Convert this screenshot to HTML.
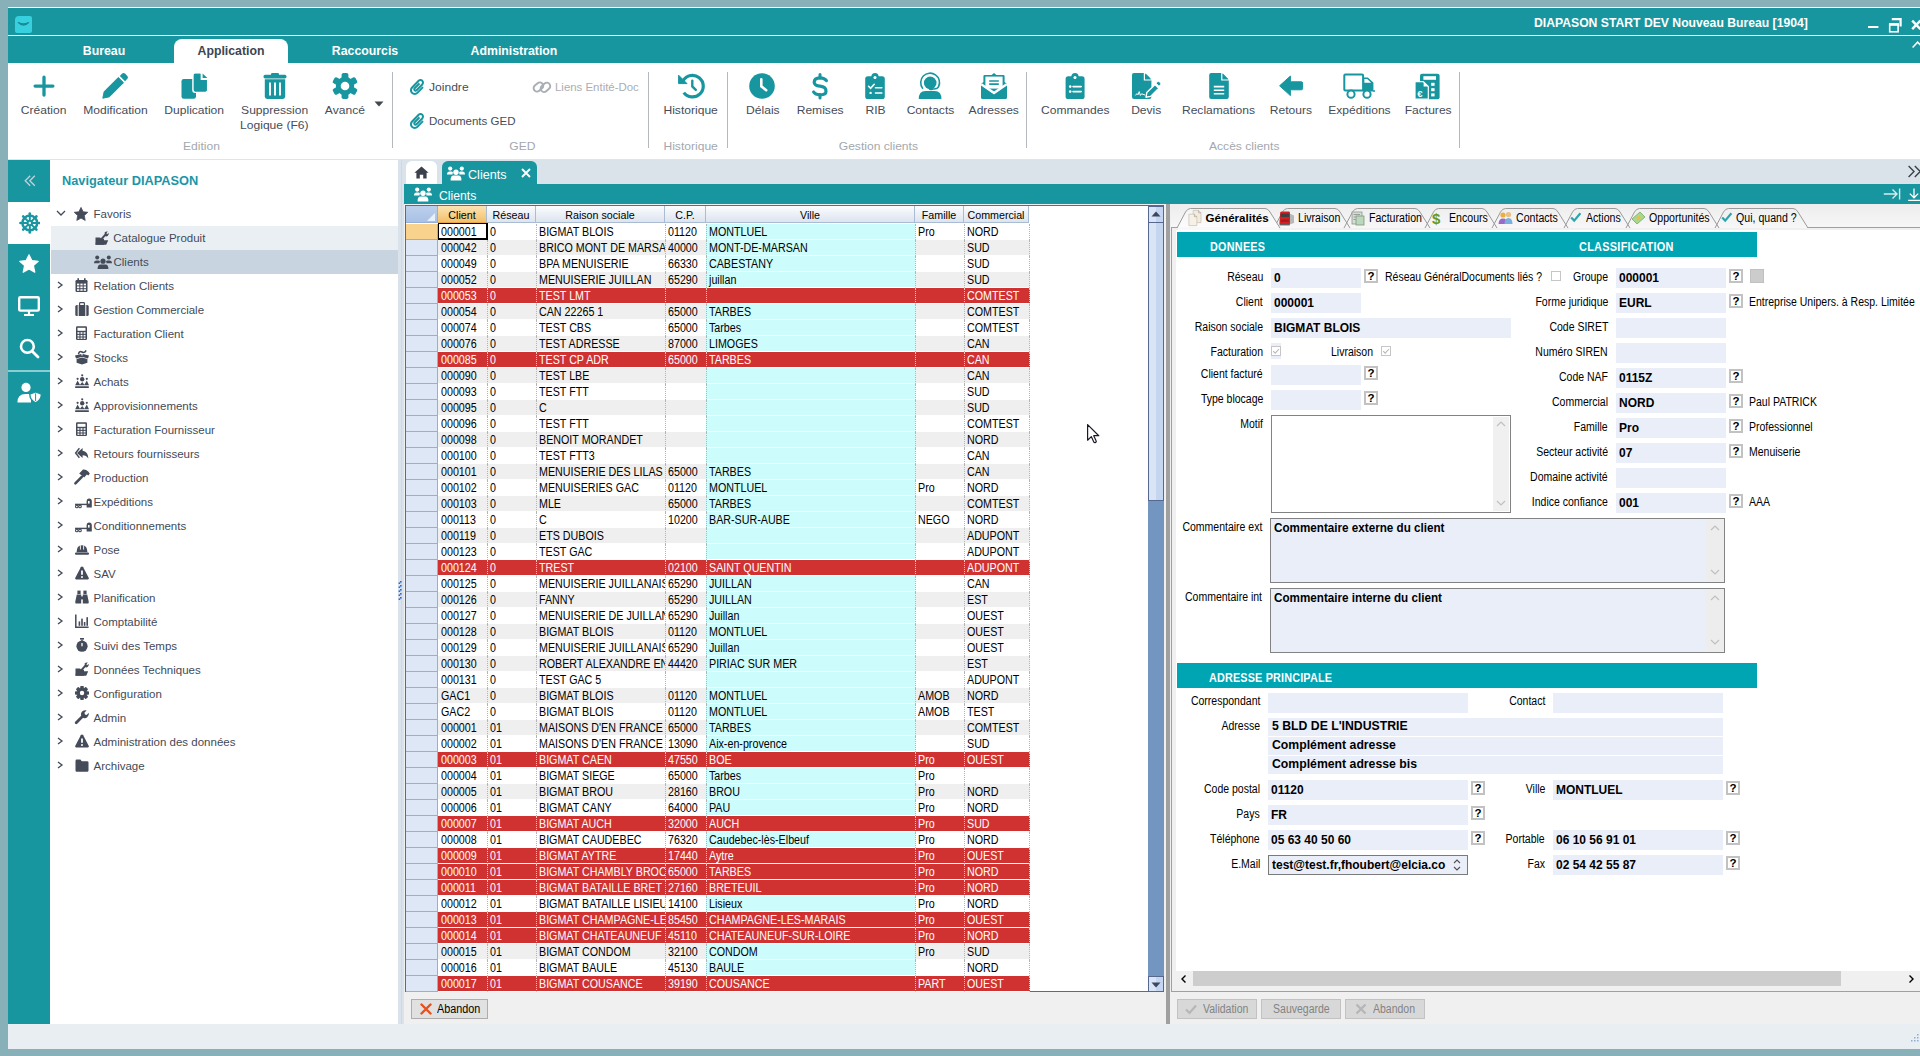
<!DOCTYPE html><html><head><meta charset="utf-8"><title>DIAPASON</title><style>
html,body{margin:0;padding:0;}
body{width:1920px;height:1056px;overflow:hidden;position:relative;background:#88b0b8;font-family:"Liberation Sans",sans-serif;}
.a{position:absolute;}
.t{position:absolute;white-space:nowrap;}
</style></head><body>
<div class="a" style="left:8px;top:7px;width:1912px;height:1px;background:#fff"></div>
<div class="a" style="left:8px;top:8px;width:1912px;height:27px;background:#1896a0"></div>
<div class="a" style="left:8px;top:35px;width:1912px;height:1px;background:#fff"></div>
<div class="a" style="left:8px;top:36px;width:1912px;height:27px;background:#1896a0"></div>
<div class="a" style="left:8px;top:63px;width:1912px;height:96px;background:#fff"></div>
<div class="a" style="left:8px;top:159px;width:1912px;height:1px;background:#dce4ec"></div>
<!-- sidebar -->
<div class="a" style="left:8px;top:160px;width:42px;height:864px;background:#1896a0"></div>
<div class="a" style="left:8px;top:202px;width:42px;height:42px;background:#fff"></div>
<div class="a" style="left:8px;top:370px;width:42px;height:2px;background:#8ccdd2"></div>
<!-- navigator -->
<div class="a" style="left:50px;top:160px;width:348px;height:864px;background:#fff"></div>
<div class="a" style="left:398px;top:160px;width:6px;height:864px;background:#dae3eb"></div>
<div class="a" style="left:401px;top:160px;width:1px;height:864px;background:#c3dbf8"></div>
<svg class="a" style="left:398px;top:581px" width="4" height="20"><g fill="#2a6ad8"><rect x="2" y="0" width="1.6" height="1.6"/><rect x="0.6" y="1.4" width="1.6" height="1.6"/><rect x="2" y="4" width="1.6" height="1.6"/><rect x="0.6" y="5.4" width="1.6" height="1.6"/><rect x="2" y="8" width="1.6" height="1.6"/><rect x="0.6" y="9.4" width="1.6" height="1.6"/><rect x="2" y="12" width="1.6" height="1.6"/><rect x="0.6" y="13.4" width="1.6" height="1.6"/><rect x="2" y="16" width="1.6" height="1.6"/><rect x="0.6" y="17.4" width="1.6" height="1.6"/></g></svg>
<!-- tab area -->
<div class="a" style="left:404px;top:160px;width:1516px;height:24px;background:#dbe3ea"></div>
<div class="a" style="left:404px;top:184px;width:1516px;height:20px;background:#1896a0"></div>
<!-- grid area bg -->
<div class="a" style="left:404px;top:204px;width:762px;height:820px;background:#f0f0f0"></div>
<div class="a" style="left:405px;top:205px;width:759px;height:787px;background:#fff;box-sizing:border-box;border:1px solid #696969"></div>
<!-- splitter -->
<div class="a" style="left:1164px;top:204px;width:6px;height:820px;background:#f0f0f0"></div>
<div class="a" style="left:1166px;top:204px;width:4px;height:820px;background:#a0a0a0"></div>
<!-- right panel -->
<div class="a" style="left:1170px;top:204px;width:750px;height:820px;background:#f0f0f0"></div>
<div class="a" style="left:1171px;top:227px;width:749px;height:765px;background:#f0f0f0;border-left:1px solid #a0a0a0;border-top:1px solid #a0a0a0;border-bottom:1px solid #a0a0a0;box-sizing:border-box"></div>
<div class="a" style="left:1176px;top:230px;width:744px;height:741px;background:#fff"></div>
<!-- status bar -->
<div class="a" style="left:8px;top:1024px;width:1912px;height:25px;background:#e9eef2"></div>

<svg class="a" style="left:15px;top:16px;" width="17" height="17" viewBox="0 0 17 17"><path d="M4 0 H15 Q17 0 17 2 V15 Q17 17 15 17 H2 Q0 17 0 15 V4 Q0 0 4 0Z" fill="#36d0de"/><path d="M3.4 6.6 Q8.5 11.6 13.6 6.6 Q8.5 9.4 3.4 6.6Z" fill="#1a8a96" stroke="#1a8a96" stroke-width="1.3" stroke-linejoin="round"/></svg>
<div class="t" style="top:16.67px;font-size:12.2px;height:12.2px;line-height:12.2px;color:#fff;font-weight:bold;left:1534px;">DIAPASON START DEV Nouveau Bureau [1904]</div>
<svg class="a" style="left:1865px;top:16px;overflow:visible" width="55" height="17" viewBox="0 0 55 17"><path d="M3 11 H13.4" stroke="#fff" stroke-width="2"/><rect x="24.7" y="8.2" width="8.4" height="7.6" fill="none" stroke="#fff" stroke-width="1.6"/><rect x="24" y="7" width="9.8" height="2.8" fill="#fff"/><path d="M26.8 3.2 H35.6 V10.6" fill="none" stroke="#fff" stroke-width="2.2"/><path d="M47.2 4.6 L55.4 13.2 M55.4 4.6 L47.2 13.2" stroke="#fff" stroke-width="2.4"/></svg>
<div class="a" style="left:174px;top:39px;width:114px;height:24px;background:#fff;border-radius:8px 8px 0 0"></div>
<div class="t" style="top:45.09px;font-size:12.3px;height:12.3px;line-height:12.3px;color:#fff;font-weight:bold;left:-196.0px;width:600px;text-align:center;">Bureau</div>
<div class="t" style="top:45.09px;font-size:12.3px;height:12.3px;line-height:12.3px;color:#3d4551;font-weight:bold;left:-69.0px;width:600px;text-align:center;">Application</div>
<div class="t" style="top:45.09px;font-size:12.3px;height:12.3px;line-height:12.3px;color:#fff;font-weight:bold;left:65.0px;width:600px;text-align:center;">Raccourcis</div>
<div class="t" style="top:45.09px;font-size:12.3px;height:12.3px;line-height:12.3px;color:#fff;font-weight:bold;left:214.0px;width:600px;text-align:center;">Administration</div>
<svg class="a" style="left:1910px;top:40px;" width="15" height="10" viewBox="0 0 15 10"><path d="M2.6 7.4 L7.6 2.2 L12.6 7.4" fill="none" stroke="#fff" stroke-width="1.5"/></svg>
<svg class="a" style="left:31.0px;top:73px;overflow:visible" width="26" height="26" viewBox="0 0 26 26"><path d="M13 4.2v17.8M4.1 13.1h17.8" stroke="#1896a0" stroke-width="3.3" stroke-linecap="round"/></svg>
<div class="t" style="top:104.85px;font-size:11.4px;height:11.4px;line-height:11.4px;color:#454d59;left:-26.0px;width:140px;text-align:center;"><span style="display:inline-block;transform:scaleX(1.06);transform-origin:50% 0">Création</span></div>
<svg class="a" style="left:102.0px;top:73px;overflow:visible" width="26" height="26" viewBox="0 0 26 26"><path d="M0.8 25.2 L2.2 18.6 L16.3 4.5 L21.5 9.7 L7.4 23.8 Z" fill="#1896a0" stroke="#1896a0" stroke-width="1" stroke-linejoin="round"/><path d="M17.8 3 L20.2 0.6 Q21.6 -0.6 23 0.6 L25.4 3 Q26.6 4.4 25.4 5.8 L23 8.2 Z" fill="#1896a0"/></svg>
<div class="t" style="top:104.85px;font-size:11.4px;height:11.4px;line-height:11.4px;color:#454d59;left:45.0px;width:140px;text-align:center;"><span style="display:inline-block;transform:scaleX(1.06);transform-origin:50% 0">Modification</span></div>
<svg class="a" style="left:181.0px;top:73px;overflow:visible" width="26" height="26" viewBox="0 0 26 26"><rect x="0.5" y="6" width="14.5" height="19.8" rx="2.2" fill="#1896a0"/><path d="M14 0 H20.2 V6.2 H26.6 V17 Q26.6 19.2 24.4 19.2 H14.2 Q12 19.2 12 17 V2 Q12 0 14 0Z" fill="#1896a0" stroke="#fff" stroke-width="1.6"/><path d="M14 0.8 H19.4 V7 H25.8 V17 Q25.8 18.4 24.4 18.4 H14.2 Q12.8 18.4 12.8 17 V2 Q12.8 0.8 14 0.8Z" fill="#1896a0"/><path d="M21.6 0.4 L26.4 5 H21.6Z" fill="#1896a0"/></svg>
<div class="t" style="top:104.85px;font-size:11.4px;height:11.4px;line-height:11.4px;color:#454d59;left:124.0px;width:140px;text-align:center;"><span style="display:inline-block;transform:scaleX(1.06);transform-origin:50% 0">Duplication</span></div>
<svg class="a" style="left:261.5px;top:73px;overflow:visible" width="26" height="26" viewBox="0 0 26 26"><rect x="1.5" y="1.8" width="23" height="3.6" rx="1.6" fill="#1896a0"/><rect x="9" y="0" width="8" height="3" rx="1.2" fill="#1896a0"/><path d="M2.8 6.2 H23.2 V23.6 Q23.2 26 20.8 26 H5.2 Q2.8 26 2.8 23.6Z" fill="#1896a0"/><path d="M8 9.5V22.5M13 9.5V22.5M18 9.5V22.5" stroke="#fff" stroke-width="1.9"/></svg>
<div class="t" style="top:104.85px;font-size:11.4px;height:11.4px;line-height:11.4px;color:#454d59;left:204.5px;width:140px;text-align:center;"><span style="display:inline-block;transform:scaleX(1.06);transform-origin:50% 0">Suppression</span></div>
<div class="t" style="top:119.85px;font-size:11.4px;height:11.4px;line-height:11.4px;color:#454d59;left:204.5px;width:140px;text-align:center;"><span style="display:inline-block;transform:scaleX(1.06);transform-origin:50% 0">Logique (F6)</span></div>
<svg class="a" style="left:332.3px;top:73px;overflow:visible" width="26" height="26" viewBox="0 0 26 26"><g fill="#1896a0"><circle cx="13" cy="13" r="9.2"/><rect x="9.6" y="0" width="6.8" height="26" rx="1.8"/><rect x="9.6" y="0" width="6.8" height="26" rx="1.8" transform="rotate(60 13 13)"/><rect x="9.6" y="0" width="6.8" height="26" rx="1.8" transform="rotate(120 13 13)"/></g><circle cx="13" cy="13" r="4.3" fill="#fff"/></svg>
<div class="t" style="top:104.85px;font-size:11.4px;height:11.4px;line-height:11.4px;color:#454d59;left:275.3px;width:140px;text-align:center;"><span style="display:inline-block;transform:scaleX(1.06);transform-origin:50% 0">Avancé</span></div>
<svg class="a" style="left:678.0px;top:73px;overflow:visible" width="26" height="26" viewBox="0 0 26 26"><path d="M5.2 7.6 A10.8 10.8 0 1 1 5.8 19.6" fill="none" stroke="#1896a0" stroke-width="3.2"/><path d="M0.6 2.2 V10.6 H9Z" fill="#1896a0" stroke="#1896a0" stroke-width="1" stroke-linejoin="round"/><path d="M14.3 7.6 V13.4 L17.8 16.9" fill="none" stroke="#1896a0" stroke-width="2.4" stroke-linecap="round"/></svg>
<div class="t" style="top:104.85px;font-size:11.4px;height:11.4px;line-height:11.4px;color:#454d59;left:620.7px;width:140px;text-align:center;"><span style="display:inline-block;transform:scaleX(1.06);transform-origin:50% 0">Historique</span></div>
<svg class="a" style="left:749.4px;top:73px;overflow:visible" width="26" height="26" viewBox="0 0 26 26"><circle cx="13" cy="13" r="12.8" fill="#1896a0"/><path d="M12.3 6.3 V13.3 L17.2 17.2" fill="none" stroke="#fff" stroke-width="2.6" stroke-linecap="round"/></svg>
<div class="t" style="top:104.85px;font-size:11.4px;height:11.4px;line-height:11.4px;color:#454d59;left:692.4px;width:140px;text-align:center;"><span style="display:inline-block;transform:scaleX(1.06);transform-origin:50% 0">Délais</span></div>
<svg class="a" style="left:807.3px;top:73px;overflow:visible" width="26" height="26" viewBox="0 0 26 26"><path d="M19.4 7.6 Q17.5 4.8 13 4.8 Q7.2 4.8 7.2 9.2 Q7.2 12.6 13 13.2 Q19 13.8 19 18.2 Q19 21.8 13 21.8 Q8.4 21.8 6.6 19" fill="none" stroke="#1896a0" stroke-width="3.2" stroke-linecap="round"/><path d="M13 1.4V5M13 21.5V25" stroke="#1896a0" stroke-width="3" stroke-linecap="round"/></svg>
<div class="t" style="top:104.85px;font-size:11.4px;height:11.4px;line-height:11.4px;color:#454d59;left:750.3px;width:140px;text-align:center;"><span style="display:inline-block;transform:scaleX(1.06);transform-origin:50% 0">Remises</span></div>
<svg class="a" style="left:862.0px;top:73px;overflow:visible" width="26" height="26" viewBox="0 0 26 26"><rect x="3.2" y="3.3" width="19.6" height="22.7" rx="2.6" fill="#1896a0"/><circle cx="13" cy="3.6" r="3.6" fill="#1896a0"/><circle cx="13" cy="4.6" r="1.5" fill="#fff"/><path d="M6.6 13.3 L8.6 15.3 L12.2 11.3 M13.5 14.8 H19.8 M13.5 20 H19.8" fill="none" stroke="#fff" stroke-width="1.6" stroke-linecap="round"/><circle cx="8.6" cy="19.9" r="1.2" fill="#fff"/></svg>
<div class="t" style="top:104.85px;font-size:11.4px;height:11.4px;line-height:11.4px;color:#454d59;left:805.0px;width:140px;text-align:center;"><span style="display:inline-block;transform:scaleX(1.06);transform-origin:50% 0">RIB</span></div>
<svg class="a" style="left:917.0px;top:73px;overflow:visible" width="26" height="26" viewBox="0 0 26 26"><circle cx="13.2" cy="9.9" r="6.3" fill="#1896a0"/><path d="M5.6 15.2 A9.4 9.4 0 1 1 21.6 13.6 Q20.6 16.4 15.4 16" fill="none" stroke="#1896a0" stroke-width="1.6" stroke-linecap="round"/><ellipse cx="14" cy="15.8" rx="2.2" ry="1.5" fill="#1896a0"/><path d="M1.8 26 Q1.6 18.2 8.6 18 H17.6 Q24.6 18.2 24.4 26Z" fill="#1896a0"/></svg>
<div class="t" style="top:104.85px;font-size:11.4px;height:11.4px;line-height:11.4px;color:#454d59;left:860.0px;width:140px;text-align:center;"><span style="display:inline-block;transform:scaleX(1.06);transform-origin:50% 0">Contacts</span></div>
<svg class="a" style="left:980.6px;top:73px;overflow:visible" width="26" height="26" viewBox="0 0 26 26"><path d="M0 11 L2.4 9 V3.2 Q2.4 2 3.6 2 H10.6 L13 0 L15.4 2 H22.4 Q23.6 2 23.6 3.2 V9 L26 11 V24 Q26 26 24 26 H2 Q0 26 0 24Z" fill="#1896a0"/><rect x="4.4" y="3.6" width="17.2" height="12" fill="#fff"/><path d="M8.2 8 H17.8 M8.2 11.2 H17.8" stroke="#1896a0" stroke-width="1.7"/><path d="M0 11.4 L13 20.2 L26 11.4" fill="none" stroke="#fff" stroke-width="3"/><path d="M0 12.6 L13 21.4 L26 12.6 V24 Q26 26 24 26 H2 Q0 26 0 24Z" fill="#1896a0"/></svg>
<div class="t" style="top:104.85px;font-size:11.4px;height:11.4px;line-height:11.4px;color:#454d59;left:923.6px;width:140px;text-align:center;"><span style="display:inline-block;transform:scaleX(1.06);transform-origin:50% 0">Adresses</span></div>
<svg class="a" style="left:1062.2px;top:73px;overflow:visible" width="26" height="26" viewBox="0 0 26 26"><rect x="3.6" y="3.3" width="19" height="22.7" rx="2.6" fill="#1896a0"/><circle cx="13" cy="3.6" r="3.6" fill="#1896a0"/><circle cx="13" cy="4.6" r="1.5" fill="#fff"/><circle cx="8.2" cy="13.6" r="1.3" fill="#fff"/><circle cx="8.2" cy="18.6" r="1.3" fill="#fff"/><path d="M11 13.6 H19.2 M11 18.6 H19.2" stroke="#fff" stroke-width="1.6" stroke-linecap="round"/></svg>
<div class="t" style="top:104.85px;font-size:11.4px;height:11.4px;line-height:11.4px;color:#454d59;left:1005.2px;width:140px;text-align:center;"><span style="display:inline-block;transform:scaleX(1.06);transform-origin:50% 0">Commandes</span></div>
<svg class="a" style="left:1131.8px;top:73px;overflow:visible" width="26" height="26" viewBox="0 0 26 26"><path d="M2 0 H12.5 L19.4 6.9 V24 Q19.4 26 17.4 26 H2 Q0 26 0 24 V2 Q0 0 2 0Z" fill="#1896a0"/><path d="M12.4 -0.2 V7 H19.6" fill="none" stroke="#fff" stroke-width="1.2"/><path d="M13.6 0.4 L19 5.8 H13.6Z" fill="#1896a0"/><path d="M14 24.2 L14.8 19.6 L23 11.4 L26.8 15.2 L18.6 23.4Z" fill="#1896a0" stroke="#fff" stroke-width="1.4" stroke-linejoin="round"/><path d="M24.2 10.2 L25.4 9 Q26.4 8 27.4 9 L28.2 9.8 Q29.2 10.8 28.2 11.8 L27 13Z" fill="#1896a0" stroke="#fff" stroke-width="0.6"/><path d="M3.4 22.4 L5 20.6 L6 21.8 L7.2 18.6 L8.4 22.4 L9.6 20.8 L13 22" fill="none" stroke="#fff" stroke-width="1"/></svg>
<div class="t" style="top:104.85px;font-size:11.4px;height:11.4px;line-height:11.4px;color:#454d59;left:1076.4px;width:140px;text-align:center;"><span style="display:inline-block;transform:scaleX(1.06);transform-origin:50% 0">Devis</span></div>
<svg class="a" style="left:1206.4px;top:73px;overflow:visible" width="26" height="26" viewBox="0 0 26 26"><g transform="translate(3.2 0)"><path d="M2 0 H12.6 L19.6 7 V24 Q19.6 26 17.6 26 H2 Q0 26 0 24 V2 Q0 0 2 0Z" fill="#1896a0"/><path d="M12.6 -0.2 V7 H19.8" fill="none" stroke="#fff" stroke-width="1.2"/><path d="M13.7 0.6 L19 5.9 H13.7Z" fill="#1896a0"/><path d="M4.6 13.6 H15 M4.6 17.2 H15 M4.6 20.8 H15" stroke="#fff" stroke-width="1.6"/></g></svg>
<div class="t" style="top:104.85px;font-size:11.4px;height:11.4px;line-height:11.4px;color:#454d59;left:1148.4px;width:140px;text-align:center;"><span style="display:inline-block;transform:scaleX(1.06);transform-origin:50% 0">Reclamations</span></div>
<svg class="a" style="left:1278.3px;top:73px;overflow:visible" width="26" height="26" viewBox="0 0 26 26"><path d="M1.6 12.8 L12.4 3 V8.8 H23.4 Q24.6 8.8 24.6 10 V15.6 Q24.6 16.8 23.4 16.8 H12.4 V22.6Z" fill="#1896a0" stroke="#1896a0" stroke-width="1" stroke-linejoin="round"/></svg>
<div class="t" style="top:104.85px;font-size:11.4px;height:11.4px;line-height:11.4px;color:#454d59;left:1221.3px;width:140px;text-align:center;"><span style="display:inline-block;transform:scaleX(1.06);transform-origin:50% 0">Retours</span></div>
<svg class="a" style="left:1343.0px;top:73px;overflow:visible" width="33" height="26" viewBox="0 0 33 26"><path d="M2.4 1.5 H19 Q20.1 1.5 20.1 2.6 V17.6 H2.4 Q1.3 17.6 1.3 16.5 V2.6 Q1.3 1.5 2.4 1.5Z" fill="none" stroke="#1896a0" stroke-width="2"/><path d="M20.1 4.4 H24.8 L30.4 9.6 V18.6 H20.1Z" fill="#1896a0"/><path d="M21.4 6 H24.2 L28.2 9.8 H21.4Z" fill="#fff"/><circle cx="8" cy="21.2" r="3.6" fill="#fff" stroke="#1896a0" stroke-width="2"/><circle cx="24" cy="21.2" r="3.6" fill="#fff" stroke="#1896a0" stroke-width="2"/><path d="M30 18 H32" stroke="#1896a0" stroke-width="1.5"/></svg>
<div class="t" style="top:104.85px;font-size:11.4px;height:11.4px;line-height:11.4px;color:#454d59;left:1289.5px;width:140px;text-align:center;"><span style="display:inline-block;transform:scaleX(1.06);transform-origin:50% 0">Expéditions</span></div>
<svg class="a" style="left:1415.0px;top:73px;overflow:visible" width="26" height="26" viewBox="0 0 26 26"><rect x="5" y="0.7" width="19.6" height="25.5" rx="2" fill="#1896a0"/><rect x="8.4" y="3.2" width="12.6" height="3.6" fill="#fff"/><path d="M0 8.6 H8.3 L13.3 13.6 V26.2 H0Z" fill="#1896a0" stroke="#fff" stroke-width="1.2"/><path d="M8.6 9 V13.4 H13" fill="#fff"/><rect x="16.2" y="9.8" width="3.4" height="3" fill="#fff"/><rect x="16.2" y="15.2" width="3.4" height="3" fill="#fff"/><rect x="16.2" y="20.4" width="3.4" height="3" fill="#fff"/><text x="2.2" y="23.6" font-size="9.5" font-family="Liberation Sans" font-weight="bold" fill="#fff">€</text></svg>
<div class="t" style="top:104.85px;font-size:11.4px;height:11.4px;line-height:11.4px;color:#454d59;left:1358.0px;width:140px;text-align:center;"><span style="display:inline-block;transform:scaleX(1.06);transform-origin:50% 0">Factures</span></div>
<svg class="a" style="left:374px;top:101px;" width="10" height="6" viewBox="0 0 10 6"><path d="M0.5 0.5 H9.5 L5 5.5Z" fill="#404851"/></svg>
<div class="a" style="left:392px;top:72px;width:1px;height:76px;background:#b4b9bf;"></div>
<div class="a" style="left:648px;top:72px;width:1px;height:76px;background:#b4b9bf;"></div>
<div class="a" style="left:727px;top:72px;width:1px;height:76px;background:#b4b9bf;"></div>
<div class="a" style="left:1026px;top:72px;width:1px;height:76px;background:#b4b9bf;"></div>
<div class="a" style="left:1459px;top:72px;width:1px;height:76px;background:#b4b9bf;"></div>
<div class="t" style="top:140.85px;font-size:11.4px;height:11.4px;line-height:11.4px;color:#a3a8ae;left:101.0px;width:200px;text-align:center;"><span style="display:inline-block;transform:scaleX(1.06);transform-origin:50% 0">Edition</span></div>
<div class="t" style="top:140.85px;font-size:11.4px;height:11.4px;line-height:11.4px;color:#a3a8ae;left:422.0px;width:200px;text-align:center;"><span style="display:inline-block;transform:scaleX(1.06);transform-origin:50% 0">GED</span></div>
<div class="t" style="top:140.85px;font-size:11.4px;height:11.4px;line-height:11.4px;color:#a3a8ae;left:591.0px;width:200px;text-align:center;"><span style="display:inline-block;transform:scaleX(1.06);transform-origin:50% 0">Historique</span></div>
<div class="t" style="top:140.85px;font-size:11.4px;height:11.4px;line-height:11.4px;color:#a3a8ae;left:778.5px;width:200px;text-align:center;"><span style="display:inline-block;transform:scaleX(1.06);transform-origin:50% 0">Gestion clients</span></div>
<div class="t" style="top:140.85px;font-size:11.4px;height:11.4px;line-height:11.4px;color:#a3a8ae;left:1144.0px;width:200px;text-align:center;"><span style="display:inline-block;transform:scaleX(1.06);transform-origin:50% 0">Accès clients</span></div>
<svg class="a" style="left:410px;top:79px;overflow:visible" width="14" height="16" viewBox="0 0 14 16"><svg viewBox="0 0 448 512" width="14" height="16"><path fill="#1896a0" d="M43.246 466.142c-58.43-60.289-57.341-157.511 1.386-217.581L254.392 34c44.316-45.332 116.351-45.336 160.671 0 43.89 44.894 43.943 117.329 0 162.276L232.214 383.128c-29.855 30.537-78.633 30.111-107.982-.998-28.275-29.97-27.368-77.473 1.452-106.953l143.743-146.835c6.182-6.314 16.312-6.422 22.626-.241l22.861 22.379c6.315 6.182 6.422 16.312.241 22.626L171.427 319.927c-4.932 5.045-5.236 13.428-.648 18.292 4.372 4.634 11.245 4.711 15.688.165l182.849-186.851c19.613-20.062 19.613-52.725-.011-72.798-19.189-19.627-49.957-19.637-69.154 0L90.39 293.295c-34.763 35.56-35.299 93.12-1.191 128.313 34.01 35.093 88.985 35.137 123.058.286l172.06-175.999c6.177-6.319 16.307-6.433 22.626-.256l22.877 22.364c6.319 6.177 6.434 16.307.256 22.626l-172.06 175.998c-59.576 60.938-155.943 60.216-214.77-.485z"/></svg></svg>
<div class="t" style="top:81.85px;font-size:11.4px;height:11.4px;line-height:11.4px;color:#454d59;left:429px;"><span style="display:inline-block;transform:scaleX(1.06);transform-origin:0 0">Joindre</span></div>
<svg class="a" style="left:410px;top:113px;overflow:visible" width="14" height="16" viewBox="0 0 14 16"><svg viewBox="0 0 448 512" width="14" height="16"><path fill="#1896a0" d="M43.246 466.142c-58.43-60.289-57.341-157.511 1.386-217.581L254.392 34c44.316-45.332 116.351-45.336 160.671 0 43.89 44.894 43.943 117.329 0 162.276L232.214 383.128c-29.855 30.537-78.633 30.111-107.982-.998-28.275-29.97-27.368-77.473 1.452-106.953l143.743-146.835c6.182-6.314 16.312-6.422 22.626-.241l22.861 22.379c6.315 6.182 6.422 16.312.241 22.626L171.427 319.927c-4.932 5.045-5.236 13.428-.648 18.292 4.372 4.634 11.245 4.711 15.688.165l182.849-186.851c19.613-20.062 19.613-52.725-.011-72.798-19.189-19.627-49.957-19.637-69.154 0L90.39 293.295c-34.763 35.56-35.299 93.12-1.191 128.313 34.01 35.093 88.985 35.137 123.058.286l172.06-175.999c6.177-6.319 16.307-6.433 22.626-.256l22.877 22.364c6.319 6.177 6.434 16.307.256 22.626l-172.06 175.998c-59.576 60.938-155.943 60.216-214.77-.485z"/></svg></svg>
<div class="t" style="top:116.02px;font-size:11.2px;height:11.2px;line-height:11.2px;color:#454d59;left:429px;"><span style="display:inline-block;transform:scaleX(1.03);transform-origin:0 0">Documents GED</span></div>
<svg class="a" style="left:532px;top:79px;overflow:visible" width="20" height="16" viewBox="0 0 20 16"><g fill="none" stroke="#a9aeb4" stroke-width="1.9"><rect x="1.2" y="4.6" width="10.5" height="6.8" rx="3.4" transform="rotate(-40 6.4 8)"/><rect x="8.2" y="5" width="10.5" height="6.8" rx="3.4" transform="rotate(-40 13.4 8.4)"/></g></svg>
<div class="t" style="top:82.10px;font-size:11.1px;height:11.1px;line-height:11.1px;color:#a9aeb4;left:555px;"><span style="display:inline-block;transform:scaleX(1.03);transform-origin:0 0">Liens Entité-Doc</span></div>
<div class="t" style="top:174.66px;font-size:12.8px;height:12.8px;line-height:12.8px;color:#1a96a8;font-weight:bold;left:62px;">Navigateur DIAPASON</div>
<div class="a" style="left:51px;top:226px;width:347px;height:24px;background:#eaeff3;"></div>
<div class="a" style="left:51px;top:250px;width:347px;height:24px;background:#c8d5e0;"></div>
<svg class="a" style="left:56px;top:210px;" width="10" height="7" viewBox="0 0 10 7"><path d="M1 1 L5 5 L9 1" fill="none" stroke="#434a57" stroke-width="1.3"/></svg>
<svg class="a" style="left:74px;top:207px;overflow:visible" width="14" height="14" viewBox="0 0 14 14"><path d="M7 0.4 L9.1 4.8 L13.8 5.3 L10.3 8.6 L11.2 13.4 L7 11.1 L2.8 13.4 L3.7 8.6 L0.2 5.3 L4.9 4.8Z" fill="#454b59" stroke="#454b59" stroke-width="0.8" stroke-linejoin="round"/></svg>
<div class="t" style="top:209.47px;font-size:11.5px;height:11.5px;line-height:11.5px;color:#434a57;left:93.5px;">Favoris</div>
<svg class="a" style="left:95px;top:231px;overflow:visible" width="14" height="14" viewBox="0 0 14 14"><path d="M0.5 6.5 H5 L6.3 7.8 H9 V13.8 H0.5Z" fill="#454b59"/><path d="M1.2 9.2 H13.2 L11.2 13.8 H0.5Z" fill="#454b59"/><path d="M6.2 8.4 L10.4 3.6" stroke="#454b59" stroke-width="2"/><path d="M9.6 1.6 Q11 0 12.8 0.6 L11.4 2.2 L12.2 3.2 L13.6 1.8 Q14.2 3.6 12.6 5 Q11.4 5.8 10 5Z" fill="#454b59"/></svg>
<div class="t" style="top:233.47px;font-size:11.5px;height:11.5px;line-height:11.5px;color:#434a57;left:113.3px;">Catalogue Produit</div>
<svg class="a" style="left:93.5px;top:255px;overflow:visible" width="18" height="14" viewBox="0 0 18 14"><circle cx="3.2" cy="2.4" r="2" fill="#454b59"/><circle cx="14.8" cy="2.4" r="2" fill="#454b59"/><circle cx="9" cy="6.2" r="2.6" fill="#454b59"/><path d="M0 8.2 Q0 5.4 2.6 5.4 H4.4 Q5.4 5.4 6 6.2 Q5.4 7.2 5.6 8.2Z M18 8.2 Q18 5.4 15.4 5.4 H13.6 Q12.6 5.4 12 6.2 Q12.6 7.2 12.4 8.2Z" fill="#454b59"/><path d="M3.6 14 Q3.4 9.6 6.6 9.4 H11.4 Q14.6 9.6 14.4 14Z" fill="#454b59"/></svg>
<div class="t" style="top:257.47px;font-size:11.5px;height:11.5px;line-height:11.5px;color:#434a57;left:113.5px;">Clients</div>
<svg class="a" style="left:57px;top:281px;" width="7" height="8" viewBox="0 0 7 8"><path d="M1 1 L5 4 L1 7" fill="none" stroke="#434a57" stroke-width="1.3"/></svg>
<svg class="a" style="left:75px;top:278px;overflow:visible" width="14" height="14" viewBox="0 0 14 14"><rect x="0.5" y="2" width="12" height="12" rx="1.3" fill="#454b59"/><path d="M3.2 0.2V3M9.8 0.2V3" stroke="#454b59" stroke-width="1.6"/><g fill="#fff"><rect x="2" y="5.6" width="2.3" height="1.8"/><rect x="5.35" y="5.6" width="2.3" height="1.8"/><rect x="8.7" y="5.6" width="2.3" height="1.8"/><rect x="2" y="8.4" width="2.3" height="1.8"/><rect x="5.35" y="8.4" width="2.3" height="1.8"/><rect x="8.7" y="8.4" width="2.3" height="1.8"/><rect x="2" y="11.2" width="2.3" height="1.6"/><rect x="5.35" y="11.2" width="2.3" height="1.6"/><rect x="8.7" y="11.2" width="2.3" height="1.6"/></g></svg>
<div class="t" style="top:281.47px;font-size:11.5px;height:11.5px;line-height:11.5px;color:#434a57;left:93.5px;">Relation Clients</div>
<svg class="a" style="left:57px;top:305px;" width="7" height="8" viewBox="0 0 7 8"><path d="M1 1 L5 4 L1 7" fill="none" stroke="#434a57" stroke-width="1.3"/></svg>
<svg class="a" style="left:75px;top:302px;overflow:visible" width="14" height="14" viewBox="0 0 14 14"><rect x="0.3" y="3" width="13.4" height="11" rx="1.6" fill="#454b59"/><rect x="4.6" y="0.6" width="4.8" height="3" rx="0.8" fill="none" stroke="#454b59" stroke-width="1.2"/><path d="M3.2 3V14M10.8 3V14" stroke="#fff" stroke-width="1"/></svg>
<div class="t" style="top:305.47px;font-size:11.5px;height:11.5px;line-height:11.5px;color:#434a57;left:93.5px;">Gestion Commerciale</div>
<svg class="a" style="left:57px;top:329px;" width="7" height="8" viewBox="0 0 7 8"><path d="M1 1 L5 4 L1 7" fill="none" stroke="#434a57" stroke-width="1.3"/></svg>
<svg class="a" style="left:75px;top:326px;overflow:visible" width="14" height="14" viewBox="0 0 14 14"><rect x="1" y="0.3" width="11" height="13.6" rx="1.2" fill="#454b59"/><rect x="2.5" y="1.8" width="8" height="3" fill="#fff"/><g fill="#fff"><rect x="2.5" y="6.2" width="1.9" height="1.6"/><rect x="5.55" y="6.2" width="1.9" height="1.6"/><rect x="8.6" y="6.2" width="1.9" height="1.6"/><rect x="2.5" y="8.9" width="1.9" height="1.6"/><rect x="5.55" y="8.9" width="1.9" height="1.6"/><rect x="8.6" y="8.9" width="1.9" height="1.6"/><rect x="2.5" y="11.5" width="1.9" height="1.4"/><rect x="5.55" y="11.5" width="1.9" height="1.4"/><rect x="8.6" y="11.5" width="1.9" height="1.4"/></g></svg>
<div class="t" style="top:329.47px;font-size:11.5px;height:11.5px;line-height:11.5px;color:#434a57;left:93.5px;">Facturation Client</div>
<svg class="a" style="left:57px;top:353px;" width="7" height="8" viewBox="0 0 7 8"><path d="M1 1 L5 4 L1 7" fill="none" stroke="#434a57" stroke-width="1.3"/></svg>
<svg class="a" style="left:75px;top:350px;overflow:visible" width="14" height="14" viewBox="0 0 14 14"><path d="M0 5.6 L6.2 4 L7.2 6.8 L1 8.4Z M14 5.6 L7.8 4 L6.8 6.8 L13 8.4Z" fill="#454b59"/><path d="M1.6 8.9 L7 7.4 L12.4 8.9 V12.8 L7 14.4 L1.6 12.8Z" fill="#454b59"/><path d="M3.6 3.6 Q4.6 0.6 7 2 Q9.4 3.4 10.8 0.8" fill="none" stroke="#454b59" stroke-width="1.5" stroke-linecap="round"/></svg>
<div class="t" style="top:353.47px;font-size:11.5px;height:11.5px;line-height:11.5px;color:#434a57;left:93.5px;">Stocks</div>
<svg class="a" style="left:57px;top:377px;" width="7" height="8" viewBox="0 0 7 8"><path d="M1 1 L5 4 L1 7" fill="none" stroke="#434a57" stroke-width="1.3"/></svg>
<svg class="a" style="left:75px;top:374px;overflow:visible" width="14" height="14" viewBox="0 0 14 14"><g fill="#454b59"><rect x="0" y="12.3" width="14" height="1.7" rx="0.8"/><circle cx="7.2" cy="1.3" r="1.1"/><circle cx="7.2" cy="5.2" r="2.2"/><circle cx="2.6" cy="4.8" r="1.1"/><circle cx="11.8" cy="4.8" r="1.1"/><path d="M0.2 11.2 L2.6 6.4 L5.2 11.2Z M9.2 11.2 L11.8 6.4 L14 11.2Z M4.6 11.2 L7.2 8 L9.8 11.2Z"/></g></svg>
<div class="t" style="top:377.47px;font-size:11.5px;height:11.5px;line-height:11.5px;color:#434a57;left:93.5px;">Achats</div>
<svg class="a" style="left:57px;top:401px;" width="7" height="8" viewBox="0 0 7 8"><path d="M1 1 L5 4 L1 7" fill="none" stroke="#434a57" stroke-width="1.3"/></svg>
<svg class="a" style="left:75px;top:398px;overflow:visible" width="14" height="14" viewBox="0 0 14 14"><g fill="#454b59"><rect x="0" y="12.3" width="14" height="1.7" rx="0.8"/><circle cx="7.2" cy="1.3" r="1.1"/><circle cx="7.2" cy="5.2" r="2.2"/><circle cx="2.6" cy="4.8" r="1.1"/><circle cx="11.8" cy="4.8" r="1.1"/><path d="M0.2 11.2 L2.6 6.4 L5.2 11.2Z M9.2 11.2 L11.8 6.4 L14 11.2Z M4.6 11.2 L7.2 8 L9.8 11.2Z"/></g></svg>
<div class="t" style="top:401.47px;font-size:11.5px;height:11.5px;line-height:11.5px;color:#434a57;left:93.5px;">Approvisionnements</div>
<svg class="a" style="left:57px;top:425px;" width="7" height="8" viewBox="0 0 7 8"><path d="M1 1 L5 4 L1 7" fill="none" stroke="#434a57" stroke-width="1.3"/></svg>
<svg class="a" style="left:75px;top:422px;overflow:visible" width="14" height="14" viewBox="0 0 14 14"><rect x="1" y="0.3" width="11" height="13.6" rx="1.2" fill="#454b59"/><rect x="2.5" y="1.8" width="8" height="3" fill="#fff"/><g fill="#fff"><rect x="2.5" y="6.2" width="1.9" height="1.6"/><rect x="5.55" y="6.2" width="1.9" height="1.6"/><rect x="8.6" y="6.2" width="1.9" height="1.6"/><rect x="2.5" y="8.9" width="1.9" height="1.6"/><rect x="5.55" y="8.9" width="1.9" height="1.6"/><rect x="8.6" y="8.9" width="1.9" height="1.6"/><rect x="2.5" y="11.5" width="1.9" height="1.4"/><rect x="5.55" y="11.5" width="1.9" height="1.4"/><rect x="8.6" y="11.5" width="1.9" height="1.4"/></g></svg>
<div class="t" style="top:425.47px;font-size:11.5px;height:11.5px;line-height:11.5px;color:#434a57;left:93.5px;">Facturation Fournisseur</div>
<svg class="a" style="left:57px;top:449px;" width="7" height="8" viewBox="0 0 7 8"><path d="M1 1 L5 4 L1 7" fill="none" stroke="#434a57" stroke-width="1.3"/></svg>
<svg class="a" style="left:75px;top:446px;overflow:visible" width="14" height="14" viewBox="0 0 14 14"><path d="M7.6 2 L2 7 L7.6 12 V9.2 Q11.4 9.2 13.4 12.6 Q13 5.2 7.6 4.8Z" fill="#454b59"/><path d="M4.4 2.2 L0.6 7 L4.4 11.8" fill="none" stroke="#454b59" stroke-width="1.4"/></svg>
<div class="t" style="top:449.47px;font-size:11.5px;height:11.5px;line-height:11.5px;color:#434a57;left:93.5px;">Retours fournisseurs</div>
<svg class="a" style="left:57px;top:473px;" width="7" height="8" viewBox="0 0 7 8"><path d="M1 1 L5 4 L1 7" fill="none" stroke="#434a57" stroke-width="1.3"/></svg>
<svg class="a" style="left:75px;top:470px;overflow:visible" width="14" height="14" viewBox="0 0 14 14"><path d="M0.4 13.4 L6.8 6.8" stroke="#454b59" stroke-width="2.6" stroke-linecap="round"/><path d="M4.2 3.4 L8 -0.4 Q11 -0.8 13.2 1.6 L14.8 3.6 L13.4 5.6 L11.8 4.6 L9.2 7.4Z" fill="#454b59"/></svg>
<div class="t" style="top:473.47px;font-size:11.5px;height:11.5px;line-height:11.5px;color:#434a57;left:93.5px;">Production</div>
<svg class="a" style="left:57px;top:497px;" width="7" height="8" viewBox="0 0 7 8"><path d="M1 1 L5 4 L1 7" fill="none" stroke="#434a57" stroke-width="1.3"/></svg>
<svg class="a" style="left:75px;top:494px;overflow:visible" width="14" height="14" viewBox="0 0 14 14"><circle cx="1.8" cy="12.4" r="1.3" fill="none" stroke="#454b59" stroke-width="1.1"/><circle cx="5" cy="12.4" r="1.3" fill="none" stroke="#454b59" stroke-width="1.1"/><path d="M0 10.4 H12" stroke="#454b59" stroke-width="1.4"/><path d="M11.6 13.6 V7.6 Q11.6 4.6 14.2 4.6 Q16.8 4.6 16.8 7.6 V13.6Z" fill="#454b59"/><rect x="13" y="7" width="1.6" height="2.6" fill="#fff"/></svg>
<div class="t" style="top:497.47px;font-size:11.5px;height:11.5px;line-height:11.5px;color:#434a57;left:93.5px;">Expéditions</div>
<svg class="a" style="left:57px;top:521px;" width="7" height="8" viewBox="0 0 7 8"><path d="M1 1 L5 4 L1 7" fill="none" stroke="#434a57" stroke-width="1.3"/></svg>
<svg class="a" style="left:75px;top:518px;overflow:visible" width="14" height="14" viewBox="0 0 14 14"><circle cx="1.8" cy="12.4" r="1.3" fill="none" stroke="#454b59" stroke-width="1.1"/><circle cx="5" cy="12.4" r="1.3" fill="none" stroke="#454b59" stroke-width="1.1"/><path d="M0 10.4 H12" stroke="#454b59" stroke-width="1.4"/><path d="M11.6 13.6 V7.6 Q11.6 4.6 14.2 4.6 Q16.8 4.6 16.8 7.6 V13.6Z" fill="#454b59"/><rect x="13" y="7" width="1.6" height="2.6" fill="#fff"/></svg>
<div class="t" style="top:521.47px;font-size:11.5px;height:11.5px;line-height:11.5px;color:#434a57;left:93.5px;">Conditionnements</div>
<svg class="a" style="left:57px;top:545px;" width="7" height="8" viewBox="0 0 7 8"><path d="M1 1 L5 4 L1 7" fill="none" stroke="#434a57" stroke-width="1.3"/></svg>
<svg class="a" style="left:75px;top:542px;overflow:visible" width="14" height="14" viewBox="0 0 14 14"><path d="M1.6 10.2 Q1.6 3.4 7 3.2 Q12.4 3.4 12.4 10.2Z" fill="#454b59"/><rect x="0" y="10.4" width="14" height="2.4" rx="1" fill="#454b59"/><path d="M5.4 3.4V7.6M8.6 3.4V7.6" stroke="#fff" stroke-width="0.9"/></svg>
<div class="t" style="top:545.47px;font-size:11.5px;height:11.5px;line-height:11.5px;color:#434a57;left:93.5px;">Pose</div>
<svg class="a" style="left:57px;top:569px;" width="7" height="8" viewBox="0 0 7 8"><path d="M1 1 L5 4 L1 7" fill="none" stroke="#434a57" stroke-width="1.3"/></svg>
<svg class="a" style="left:75px;top:566px;overflow:visible" width="14" height="14" viewBox="0 0 14 14"><path d="M7 0.6 Q7.8 0.6 8.2 1.3 L13.8 12 Q14.2 13.4 12.8 13.4 H1.2 Q-0.2 13.4 0.2 12 L5.8 1.3 Q6.2 0.6 7 0.6Z" fill="#454b59"/><path d="M7 4.6V8.8" stroke="#fff" stroke-width="1.8"/><circle cx="7" cy="11" r="1" fill="#fff"/></svg>
<div class="t" style="top:569.47px;font-size:11.5px;height:11.5px;line-height:11.5px;color:#434a57;left:93.5px;">SAV</div>
<svg class="a" style="left:57px;top:593px;" width="7" height="8" viewBox="0 0 7 8"><path d="M1 1 L5 4 L1 7" fill="none" stroke="#434a57" stroke-width="1.3"/></svg>
<svg class="a" style="left:75px;top:590px;overflow:visible" width="14" height="14" viewBox="0 0 14 14"><path d="M0.2 12 L1.8 4.6 H6.2 V13.6 H0.6Z M13.8 12 L12.2 4.6 H7.8 V13.6 H13.4Z" fill="#454b59"/><rect x="2.4" y="0.6" width="3.2" height="3.4" fill="#454b59"/><rect x="8.4" y="0.6" width="3.2" height="3.4" fill="#454b59"/><rect x="6" y="6.4" width="2" height="3" fill="#454b59"/></svg>
<div class="t" style="top:593.47px;font-size:11.5px;height:11.5px;line-height:11.5px;color:#434a57;left:93.5px;">Planification</div>
<svg class="a" style="left:57px;top:617px;" width="7" height="8" viewBox="0 0 7 8"><path d="M1 1 L5 4 L1 7" fill="none" stroke="#434a57" stroke-width="1.3"/></svg>
<svg class="a" style="left:75px;top:614px;overflow:visible" width="14" height="14" viewBox="0 0 14 14"><path d="M0.8 0.5V13.2H13.6" fill="none" stroke="#454b59" stroke-width="1.5"/><g fill="#454b59"><rect x="3.6" y="7.4" width="1.6" height="4.4"/><rect x="6.2" y="4.6" width="1.6" height="7.2"/><rect x="8.8" y="8" width="1.6" height="3.8"/><rect x="11.4" y="3.2" width="1.6" height="8.6"/></g></svg>
<div class="t" style="top:617.47px;font-size:11.5px;height:11.5px;line-height:11.5px;color:#434a57;left:93.5px;">Comptabilité</div>
<svg class="a" style="left:57px;top:641px;" width="7" height="8" viewBox="0 0 7 8"><path d="M1 1 L5 4 L1 7" fill="none" stroke="#434a57" stroke-width="1.3"/></svg>
<svg class="a" style="left:75px;top:638px;overflow:visible" width="14" height="14" viewBox="0 0 14 14"><circle cx="7" cy="8.2" r="5.6" fill="#454b59"/><rect x="5" y="0" width="4" height="1.6" fill="#454b59"/><path d="M7 1.6V3" stroke="#454b59" stroke-width="1.4"/><path d="M7 8.2V5" stroke="#fff" stroke-width="1.3"/></svg>
<div class="t" style="top:641.47px;font-size:11.5px;height:11.5px;line-height:11.5px;color:#434a57;left:93.5px;">Suivi des Temps</div>
<svg class="a" style="left:57px;top:665px;" width="7" height="8" viewBox="0 0 7 8"><path d="M1 1 L5 4 L1 7" fill="none" stroke="#434a57" stroke-width="1.3"/></svg>
<svg class="a" style="left:75px;top:662px;overflow:visible" width="14" height="14" viewBox="0 0 14 14"><path d="M0.5 6.5 H5 L6.3 7.8 H9 V13.8 H0.5Z" fill="#454b59"/><path d="M1.2 9.2 H13.2 L11.2 13.8 H0.5Z" fill="#454b59"/><path d="M6.2 8.4 L10.4 3.6" stroke="#454b59" stroke-width="2"/><path d="M9.6 1.6 Q11 0 12.8 0.6 L11.4 2.2 L12.2 3.2 L13.6 1.8 Q14.2 3.6 12.6 5 Q11.4 5.8 10 5Z" fill="#454b59"/></svg>
<div class="t" style="top:665.47px;font-size:11.5px;height:11.5px;line-height:11.5px;color:#434a57;left:93.5px;">Données Techniques</div>
<svg class="a" style="left:57px;top:689px;" width="7" height="8" viewBox="0 0 7 8"><path d="M1 1 L5 4 L1 7" fill="none" stroke="#434a57" stroke-width="1.3"/></svg>
<svg class="a" style="left:75px;top:686px;overflow:visible" width="14" height="14" viewBox="0 0 14 14"><g fill="#454b59"><circle cx="7" cy="7" r="5"/><rect x="5.2" y="0" width="3.6" height="14" rx="0.8"/><rect x="5.2" y="0" width="3.6" height="14" rx="0.8" transform="rotate(45 7 7)"/><rect x="5.2" y="0" width="3.6" height="14" rx="0.8" transform="rotate(90 7 7)"/><rect x="5.2" y="0" width="3.6" height="14" rx="0.8" transform="rotate(135 7 7)"/></g><circle cx="7" cy="7" r="2.2" fill="#fff"/></svg>
<div class="t" style="top:689.47px;font-size:11.5px;height:11.5px;line-height:11.5px;color:#434a57;left:93.5px;">Configuration</div>
<svg class="a" style="left:57px;top:713px;" width="7" height="8" viewBox="0 0 7 8"><path d="M1 1 L5 4 L1 7" fill="none" stroke="#434a57" stroke-width="1.3"/></svg>
<svg class="a" style="left:75px;top:710px;overflow:visible" width="14" height="14" viewBox="0 0 14 14"><path d="M1.2 12.8 L7.4 6.6" stroke="#454b59" stroke-width="2.8" stroke-linecap="round"/><path d="M6 5.2 Q5.6 1.6 8.8 0.4 Q10.4 0 11.6 0.4 L9.4 2.8 L10 4.4 L11.6 5 L13.8 2.8 Q14.4 5.8 12 7.6 Q10.4 8.6 8.4 8Z" fill="#454b59"/></svg>
<div class="t" style="top:713.47px;font-size:11.5px;height:11.5px;line-height:11.5px;color:#434a57;left:93.5px;">Admin</div>
<svg class="a" style="left:57px;top:737px;" width="7" height="8" viewBox="0 0 7 8"><path d="M1 1 L5 4 L1 7" fill="none" stroke="#434a57" stroke-width="1.3"/></svg>
<svg class="a" style="left:75px;top:734px;overflow:visible" width="14" height="14" viewBox="0 0 14 14"><path d="M7 0.6 Q7.8 0.6 8.2 1.3 L13.8 12 Q14.2 13.4 12.8 13.4 H1.2 Q-0.2 13.4 0.2 12 L5.8 1.3 Q6.2 0.6 7 0.6Z" fill="#454b59"/><path d="M7 4.6V8.8" stroke="#fff" stroke-width="1.8"/><circle cx="7" cy="11" r="1" fill="#fff"/></svg>
<div class="t" style="top:737.47px;font-size:11.5px;height:11.5px;line-height:11.5px;color:#434a57;left:93.5px;">Administration des données</div>
<svg class="a" style="left:57px;top:761px;" width="7" height="8" viewBox="0 0 7 8"><path d="M1 1 L5 4 L1 7" fill="none" stroke="#434a57" stroke-width="1.3"/></svg>
<svg class="a" style="left:75px;top:758px;overflow:visible" width="14" height="14" viewBox="0 0 14 14"><path d="M0.5 3 Q0.5 1.6 1.8 1.6 H5.4 L6.8 3.2 H12.2 Q13.5 3.2 13.5 4.5 V12.4 Q13.5 13.7 12.2 13.7 H1.8 Q0.5 13.7 0.5 12.4Z" fill="#454b59"/></svg>
<div class="t" style="top:761.47px;font-size:11.5px;height:11.5px;line-height:11.5px;color:#434a57;left:93.5px;">Archivage</div>
<svg class="a" style="left:24px;top:175px;" width="12" height="12" viewBox="0 0 12 12"><path d="M6.2 0.8 L1.2 5.8 L6.2 10.8 M10.8 0.8 L5.8 5.8 L10.8 10.8" fill="none" stroke="#c9cfd6" stroke-width="1.3"/></svg>
<svg class="a" style="left:18px;top:212px;" width="22" height="22" viewBox="0 0 22 22"><g stroke="#1a96a0" fill="none"><circle cx="11.8" cy="11" r="7.4" stroke-width="2.5"/><circle cx="11.8" cy="11" r="2.2" stroke-width="2"/><path d="M11.8 1.4 V9" stroke-width="2" transform="rotate(0 11.8 11)"/><circle cx="11.8" cy="1.6" r="1.3" fill="#1a96a0" stroke="none" transform="rotate(0 11.8 11)"/><path d="M11.8 1.4 V9" stroke-width="2" transform="rotate(45 11.8 11)"/><circle cx="11.8" cy="1.6" r="1.3" fill="#1a96a0" stroke="none" transform="rotate(45 11.8 11)"/><path d="M11.8 1.4 V9" stroke-width="2" transform="rotate(90 11.8 11)"/><circle cx="11.8" cy="1.6" r="1.3" fill="#1a96a0" stroke="none" transform="rotate(90 11.8 11)"/><path d="M11.8 1.4 V9" stroke-width="2" transform="rotate(135 11.8 11)"/><circle cx="11.8" cy="1.6" r="1.3" fill="#1a96a0" stroke="none" transform="rotate(135 11.8 11)"/><path d="M11.8 1.4 V9" stroke-width="2" transform="rotate(180 11.8 11)"/><circle cx="11.8" cy="1.6" r="1.3" fill="#1a96a0" stroke="none" transform="rotate(180 11.8 11)"/><path d="M11.8 1.4 V9" stroke-width="2" transform="rotate(225 11.8 11)"/><circle cx="11.8" cy="1.6" r="1.3" fill="#1a96a0" stroke="none" transform="rotate(225 11.8 11)"/><path d="M11.8 1.4 V9" stroke-width="2" transform="rotate(270 11.8 11)"/><circle cx="11.8" cy="1.6" r="1.3" fill="#1a96a0" stroke="none" transform="rotate(270 11.8 11)"/><path d="M11.8 1.4 V9" stroke-width="2" transform="rotate(315 11.8 11)"/><circle cx="11.8" cy="1.6" r="1.3" fill="#1a96a0" stroke="none" transform="rotate(315 11.8 11)"/></g></svg>
<svg class="a" style="left:19px;top:254px;" width="20" height="20" viewBox="0 0 20 20"><path d="M10 0.8 L12.8 6.6 L19.2 7.3 L14.4 11.6 L15.8 18.2 L10 14.9 L4.2 18.2 L5.6 11.6 L0.8 7.3 L7.2 6.6Z" fill="#fff" stroke="#fff" stroke-width="1.2" stroke-linejoin="round"/></svg>
<svg class="a" style="left:18px;top:296px;" width="22" height="20" viewBox="0 0 22 20"><rect x="1.2" y="1.2" width="19.6" height="13.4" rx="1.2" fill="none" stroke="#fff" stroke-width="2.4"/><path d="M11 14.6V18M6 19H16" stroke="#fff" stroke-width="2.2"/></svg>
<svg class="a" style="left:19px;top:338px;" width="21" height="21" viewBox="0 0 21 21"><circle cx="8.4" cy="8.4" r="6.4" fill="none" stroke="#fff" stroke-width="2.6"/><path d="M13.2 13.2 L19 19" stroke="#fff" stroke-width="2.8" stroke-linecap="round"/></svg>
<svg class="a" style="left:17px;top:382px;" width="25" height="21" viewBox="0 0 25 21"><circle cx="9" cy="5.4" r="4.6" fill="#fff"/><path d="M0.4 20.6 Q0.4 12 8.4 12 H11.6 Q13 12 14 12.4 V20.6Z" fill="#fff"/><path d="M18.6 9.8 L24.4 12 Q24.4 18.2 18.6 20.8 Q12.8 18.2 12.8 12Z" fill="#fff" stroke="#1896a0" stroke-width="1.4"/><path d="M18.6 11.4 V19" stroke="#1896a0" stroke-width="1"/></svg>
<div class="a" style="left:406px;top:161px;width:31px;height:23px;background:#fff;border-radius:6px 6px 0 0"></div>
<svg class="a" style="left:414px;top:166px;" width="15" height="13" viewBox="0 0 15 13"><path d="M7.5 0.6 L14.6 6.8 H12.6 V12.6 H9.2 V8.8 H5.8 V12.6 H2.4 V6.8 H0.4Z" fill="#3b404c"/></svg>
<div class="a" style="left:442px;top:161px;width:95px;height:23px;background:#1896a0;border-radius:6px 6px 0 0"></div>
<svg class="a" style="left:447px;top:166px;overflow:visible" width="18" height="15" viewBox="0 0 18 15"><circle cx="3.2" cy="2.6" r="2.1" fill="#fff"/><circle cx="14.8" cy="2.6" r="2.1" fill="#fff"/><circle cx="9" cy="6.3" r="2.7" fill="#fff"/><path d="M0 8.6 Q0 5.6 2.6 5.6 H4.4 Q5.4 5.6 6 6.4 Q5.4 7.4 5.6 8.6Z M18 8.6 Q18 5.6 15.4 5.6 H13.6 Q12.6 5.6 12 6.4 Q12.6 7.4 12.4 8.6Z" fill="#fff"/><path d="M3.6 14.4 Q3.4 9.8 6.6 9.6 H11.4 Q14.6 9.8 14.4 14.4Z" fill="#fff"/></svg>
<div class="t" style="top:168.83px;font-size:12.6px;height:12.6px;line-height:12.6px;color:#fff;left:468px;">Clients</div>
<svg class="a" style="left:521px;top:168px;" width="10" height="10" viewBox="0 0 10 10"><path d="M1 1 L9 9 M9 1 L1 9" stroke="#fff" stroke-width="1.8"/></svg>
<svg class="a" style="left:1907px;top:165px;overflow:visible" width="14" height="13" viewBox="0 0 14 13"><path d="M1.6 1 L7 6.5 L1.6 12 M7.8 1 L13.2 6.5 L7.8 12" fill="none" stroke="#3b404c" stroke-width="1.4"/></svg>
<svg class="a" style="left:414px;top:187px;overflow:visible" width="18" height="15" viewBox="0 0 18 15"><circle cx="3.2" cy="2.6" r="2.1" fill="#fff"/><circle cx="14.8" cy="2.6" r="2.1" fill="#fff"/><circle cx="9" cy="6.3" r="2.7" fill="#fff"/><path d="M0 8.6 Q0 5.6 2.6 5.6 H4.4 Q5.4 5.6 6 6.4 Q5.4 7.4 5.6 8.6Z M18 8.6 Q18 5.6 15.4 5.6 H13.6 Q12.6 5.6 12 6.4 Q12.6 7.4 12.4 8.6Z" fill="#fff"/><path d="M3.6 14.4 Q3.4 9.8 6.6 9.6 H11.4 Q14.6 9.8 14.4 14.4Z" fill="#fff"/></svg>
<div class="t" style="top:189.67px;font-size:12.2px;height:12.2px;line-height:12.2px;color:#fff;left:439px;">Clients</div>
<svg class="a" style="left:1883px;top:188px;overflow:visible" width="18" height="12" viewBox="0 0 18 12"><path d="M0.8 6 H14 M9.5 1.5 L14 6 L9.5 10.5 M16.6 0.6 V11.4" fill="none" stroke="#d6ecee" stroke-width="1.4"/></svg>
<svg class="a" style="left:1908px;top:188px;overflow:visible" width="12" height="13" viewBox="0 0 12 13"><path d="M6 0.6 V9.6 M1.8 5.6 L6 9.8 L10.2 5.6 M0.2 12.4 H12" fill="none" stroke="#fff" stroke-width="1.3"/></svg>
<style>.gh{position:absolute;top:206px;height:17px;box-sizing:border-box;border-right:1px solid #a9bcd4;border-bottom:1px solid #a9bcd4;background:linear-gradient(#fbfcfe,#e9eef5 60%,#dde4ee);font-size:10.7px;line-height:18px;text-align:center;color:#000;white-space:nowrap;overflow:hidden}.gr{position:absolute;left:438px;width:592px;height:16px;box-shadow:inset 0 -1px 0 #fff}.gc span{display:inline-block;transform:scaleX(.892);transform-origin:0 0}.gc{position:absolute;top:0;height:16px;box-sizing:border-box;border-left:1px dotted #b4b4b4;font-size:12px;line-height:16.4px;padding-left:1.6px;white-space:nowrap;overflow:hidden;color:#000}.rh{position:absolute;left:406px;width:32px;height:16px;box-sizing:border-box;background:#dde7f5;border-right:1px solid #94b0d6;border-bottom:1px solid #94b0d6}</style>
<div class="gh" style="left:406px;width:32px;background:linear-gradient(#bcd0ec,#a9c1e6);border-right:1px solid #94b0d6;border-bottom:1px solid #94b0d6"></div>
<svg class="a" style="left:426px;top:212px;" width="10" height="10" viewBox="0 0 10 10"><path d="M9 1 V9 H1Z" fill="#e8f0fb"/></svg>
<div class="gh" style="left:438px;width:49px;background:linear-gradient(#fbe3b4,#f7d08a 55%,#f1c06a);border-bottom:1px solid #e8a64a;">Client</div>
<div class="gh" style="left:487px;width:49px;">Réseau</div>
<div class="gh" style="left:536px;width:129px;">Raison sociale</div>
<div class="gh" style="left:665px;width:41px;">C.P.</div>
<div class="gh" style="left:706px;width:209px;">Ville</div>
<div class="gh" style="left:915px;width:49px;">Famille</div>
<div class="gh" style="left:964px;width:65px;">Commercial</div>
<div class="rh" style="top:224px;background:#f9d28e"></div>
<div class="gr" style="top:224px;background:#fff"><div class="gc" style="left:0px;width:49px;color:#000;border-left:none;padding-left:2.9px;"><span>000001</span></div><div class="gc" style="left:49px;width:49px;color:#000;"><span>0</span></div><div class="gc" style="left:98px;width:129px;color:#000;"><span>BIGMAT BLOIS</span></div><div class="gc" style="left:227px;width:41px;color:#000;"><span>01120</span></div><div class="gc" style="left:268px;width:209px;color:#000;background:#cdfcfc;box-shadow:inset 0 -1px 0 #fff;"><span>MONTLUEL</span></div><div class="gc" style="left:477px;width:49px;color:#000;"><span>Pro</span></div><div class="gc" style="left:526px;width:65px;color:#000;border-right:1px dotted #b4b4b4;width:66px;"><span>NORD</span></div></div>
<div class="rh" style="top:240px;background:#dde7f5"></div>
<div class="gr" style="top:240px;background:#efefef"><div class="gc" style="left:0px;width:49px;color:#000;border-left:none;padding-left:2.9px;"><span>000042</span></div><div class="gc" style="left:49px;width:49px;color:#000;"><span>0</span></div><div class="gc" style="left:98px;width:129px;color:#000;"><span>BRICO MONT DE MARSA</span></div><div class="gc" style="left:227px;width:41px;color:#000;"><span>40000</span></div><div class="gc" style="left:268px;width:209px;color:#000;background:#cdfcfc;box-shadow:inset 0 -1px 0 #fff;"><span>MONT-DE-MARSAN</span></div><div class="gc" style="left:477px;width:49px;color:#000;"><span></span></div><div class="gc" style="left:526px;width:65px;color:#000;border-right:1px dotted #b4b4b4;width:66px;"><span>SUD</span></div></div>
<div class="rh" style="top:256px;background:#dde7f5"></div>
<div class="gr" style="top:256px;background:#fff"><div class="gc" style="left:0px;width:49px;color:#000;border-left:none;padding-left:2.9px;"><span>000049</span></div><div class="gc" style="left:49px;width:49px;color:#000;"><span>0</span></div><div class="gc" style="left:98px;width:129px;color:#000;"><span>BPA MENUISERIE</span></div><div class="gc" style="left:227px;width:41px;color:#000;"><span>66330</span></div><div class="gc" style="left:268px;width:209px;color:#000;background:#cdfcfc;box-shadow:inset 0 -1px 0 #fff;"><span>CABESTANY</span></div><div class="gc" style="left:477px;width:49px;color:#000;"><span></span></div><div class="gc" style="left:526px;width:65px;color:#000;border-right:1px dotted #b4b4b4;width:66px;"><span>SUD</span></div></div>
<div class="rh" style="top:272px;background:#dde7f5"></div>
<div class="gr" style="top:272px;background:#efefef"><div class="gc" style="left:0px;width:49px;color:#000;border-left:none;padding-left:2.9px;"><span>000052</span></div><div class="gc" style="left:49px;width:49px;color:#000;"><span>0</span></div><div class="gc" style="left:98px;width:129px;color:#000;"><span>MENUISERIE JUILLAN</span></div><div class="gc" style="left:227px;width:41px;color:#000;"><span>65290</span></div><div class="gc" style="left:268px;width:209px;color:#000;background:#cdfcfc;box-shadow:inset 0 -1px 0 #fff;"><span>juillan</span></div><div class="gc" style="left:477px;width:49px;color:#000;"><span></span></div><div class="gc" style="left:526px;width:65px;color:#000;border-right:1px dotted #b4b4b4;width:66px;"><span>SUD</span></div></div>
<div class="rh" style="top:288px;background:#dde7f5"></div>
<div class="gr" style="top:288px;background:#d03232"><div class="gc" style="left:0px;width:49px;color:#fff;border-left-color:#f4c4c4;border-left:none;padding-left:2.9px;"><span>000053</span></div><div class="gc" style="left:49px;width:49px;color:#fff;border-left-color:#f4c4c4;"><span>0</span></div><div class="gc" style="left:98px;width:129px;color:#fff;border-left-color:#f4c4c4;"><span>TEST LMT</span></div><div class="gc" style="left:227px;width:41px;color:#fff;border-left-color:#f4c4c4;"><span></span></div><div class="gc" style="left:268px;width:209px;color:#fff;border-left-color:#f4c4c4;"><span></span></div><div class="gc" style="left:477px;width:49px;color:#fff;border-left-color:#f4c4c4;"><span></span></div><div class="gc" style="left:526px;width:65px;color:#fff;border-left-color:#f4c4c4;border-right:1px dotted #f4c4c4;width:66px;"><span>COMTEST</span></div></div>
<div class="rh" style="top:304px;background:#dde7f5"></div>
<div class="gr" style="top:304px;background:#efefef"><div class="gc" style="left:0px;width:49px;color:#000;border-left:none;padding-left:2.9px;"><span>000054</span></div><div class="gc" style="left:49px;width:49px;color:#000;"><span>0</span></div><div class="gc" style="left:98px;width:129px;color:#000;"><span>CAN 22265 1</span></div><div class="gc" style="left:227px;width:41px;color:#000;"><span>65000</span></div><div class="gc" style="left:268px;width:209px;color:#000;background:#cdfcfc;box-shadow:inset 0 -1px 0 #fff;"><span>TARBES</span></div><div class="gc" style="left:477px;width:49px;color:#000;"><span></span></div><div class="gc" style="left:526px;width:65px;color:#000;border-right:1px dotted #b4b4b4;width:66px;"><span>COMTEST</span></div></div>
<div class="rh" style="top:320px;background:#dde7f5"></div>
<div class="gr" style="top:320px;background:#fff"><div class="gc" style="left:0px;width:49px;color:#000;border-left:none;padding-left:2.9px;"><span>000074</span></div><div class="gc" style="left:49px;width:49px;color:#000;"><span>0</span></div><div class="gc" style="left:98px;width:129px;color:#000;"><span>TEST CBS</span></div><div class="gc" style="left:227px;width:41px;color:#000;"><span>65000</span></div><div class="gc" style="left:268px;width:209px;color:#000;background:#cdfcfc;box-shadow:inset 0 -1px 0 #fff;"><span>Tarbes</span></div><div class="gc" style="left:477px;width:49px;color:#000;"><span></span></div><div class="gc" style="left:526px;width:65px;color:#000;border-right:1px dotted #b4b4b4;width:66px;"><span>COMTEST</span></div></div>
<div class="rh" style="top:336px;background:#dde7f5"></div>
<div class="gr" style="top:336px;background:#efefef"><div class="gc" style="left:0px;width:49px;color:#000;border-left:none;padding-left:2.9px;"><span>000076</span></div><div class="gc" style="left:49px;width:49px;color:#000;"><span>0</span></div><div class="gc" style="left:98px;width:129px;color:#000;"><span>TEST ADRESSE</span></div><div class="gc" style="left:227px;width:41px;color:#000;"><span>87000</span></div><div class="gc" style="left:268px;width:209px;color:#000;background:#cdfcfc;box-shadow:inset 0 -1px 0 #fff;"><span>LIMOGES</span></div><div class="gc" style="left:477px;width:49px;color:#000;"><span></span></div><div class="gc" style="left:526px;width:65px;color:#000;border-right:1px dotted #b4b4b4;width:66px;"><span>CAN</span></div></div>
<div class="rh" style="top:352px;background:#dde7f5"></div>
<div class="gr" style="top:352px;background:#d03232"><div class="gc" style="left:0px;width:49px;color:#fff;border-left-color:#f4c4c4;border-left:none;padding-left:2.9px;"><span>000085</span></div><div class="gc" style="left:49px;width:49px;color:#fff;border-left-color:#f4c4c4;"><span>0</span></div><div class="gc" style="left:98px;width:129px;color:#fff;border-left-color:#f4c4c4;"><span>TEST CP ADR</span></div><div class="gc" style="left:227px;width:41px;color:#fff;border-left-color:#f4c4c4;"><span>65000</span></div><div class="gc" style="left:268px;width:209px;color:#fff;border-left-color:#f4c4c4;"><span>TARBES</span></div><div class="gc" style="left:477px;width:49px;color:#fff;border-left-color:#f4c4c4;"><span></span></div><div class="gc" style="left:526px;width:65px;color:#fff;border-left-color:#f4c4c4;border-right:1px dotted #f4c4c4;width:66px;"><span>CAN</span></div></div>
<div class="rh" style="top:368px;background:#dde7f5"></div>
<div class="gr" style="top:368px;background:#efefef"><div class="gc" style="left:0px;width:49px;color:#000;border-left:none;padding-left:2.9px;"><span>000090</span></div><div class="gc" style="left:49px;width:49px;color:#000;"><span>0</span></div><div class="gc" style="left:98px;width:129px;color:#000;"><span>TEST LBE</span></div><div class="gc" style="left:227px;width:41px;color:#000;"><span></span></div><div class="gc" style="left:268px;width:209px;color:#000;background:#cdfcfc;box-shadow:inset 0 -1px 0 #fff;"><span></span></div><div class="gc" style="left:477px;width:49px;color:#000;"><span></span></div><div class="gc" style="left:526px;width:65px;color:#000;border-right:1px dotted #b4b4b4;width:66px;"><span>CAN</span></div></div>
<div class="rh" style="top:384px;background:#dde7f5"></div>
<div class="gr" style="top:384px;background:#fff"><div class="gc" style="left:0px;width:49px;color:#000;border-left:none;padding-left:2.9px;"><span>000093</span></div><div class="gc" style="left:49px;width:49px;color:#000;"><span>0</span></div><div class="gc" style="left:98px;width:129px;color:#000;"><span>TEST FTT</span></div><div class="gc" style="left:227px;width:41px;color:#000;"><span></span></div><div class="gc" style="left:268px;width:209px;color:#000;background:#cdfcfc;box-shadow:inset 0 -1px 0 #fff;"><span></span></div><div class="gc" style="left:477px;width:49px;color:#000;"><span></span></div><div class="gc" style="left:526px;width:65px;color:#000;border-right:1px dotted #b4b4b4;width:66px;"><span>SUD</span></div></div>
<div class="rh" style="top:400px;background:#dde7f5"></div>
<div class="gr" style="top:400px;background:#efefef"><div class="gc" style="left:0px;width:49px;color:#000;border-left:none;padding-left:2.9px;"><span>000095</span></div><div class="gc" style="left:49px;width:49px;color:#000;"><span>0</span></div><div class="gc" style="left:98px;width:129px;color:#000;"><span>C</span></div><div class="gc" style="left:227px;width:41px;color:#000;"><span></span></div><div class="gc" style="left:268px;width:209px;color:#000;background:#cdfcfc;box-shadow:inset 0 -1px 0 #fff;"><span></span></div><div class="gc" style="left:477px;width:49px;color:#000;"><span></span></div><div class="gc" style="left:526px;width:65px;color:#000;border-right:1px dotted #b4b4b4;width:66px;"><span>SUD</span></div></div>
<div class="rh" style="top:416px;background:#dde7f5"></div>
<div class="gr" style="top:416px;background:#fff"><div class="gc" style="left:0px;width:49px;color:#000;border-left:none;padding-left:2.9px;"><span>000096</span></div><div class="gc" style="left:49px;width:49px;color:#000;"><span>0</span></div><div class="gc" style="left:98px;width:129px;color:#000;"><span>TEST FTT</span></div><div class="gc" style="left:227px;width:41px;color:#000;"><span></span></div><div class="gc" style="left:268px;width:209px;color:#000;background:#cdfcfc;box-shadow:inset 0 -1px 0 #fff;"><span></span></div><div class="gc" style="left:477px;width:49px;color:#000;"><span></span></div><div class="gc" style="left:526px;width:65px;color:#000;border-right:1px dotted #b4b4b4;width:66px;"><span>COMTEST</span></div></div>
<div class="rh" style="top:432px;background:#dde7f5"></div>
<div class="gr" style="top:432px;background:#efefef"><div class="gc" style="left:0px;width:49px;color:#000;border-left:none;padding-left:2.9px;"><span>000098</span></div><div class="gc" style="left:49px;width:49px;color:#000;"><span>0</span></div><div class="gc" style="left:98px;width:129px;color:#000;"><span>BENOIT MORANDET</span></div><div class="gc" style="left:227px;width:41px;color:#000;"><span></span></div><div class="gc" style="left:268px;width:209px;color:#000;background:#cdfcfc;box-shadow:inset 0 -1px 0 #fff;"><span></span></div><div class="gc" style="left:477px;width:49px;color:#000;"><span></span></div><div class="gc" style="left:526px;width:65px;color:#000;border-right:1px dotted #b4b4b4;width:66px;"><span>NORD</span></div></div>
<div class="rh" style="top:448px;background:#dde7f5"></div>
<div class="gr" style="top:448px;background:#fff"><div class="gc" style="left:0px;width:49px;color:#000;border-left:none;padding-left:2.9px;"><span>000100</span></div><div class="gc" style="left:49px;width:49px;color:#000;"><span>0</span></div><div class="gc" style="left:98px;width:129px;color:#000;"><span>TEST FTT3</span></div><div class="gc" style="left:227px;width:41px;color:#000;"><span></span></div><div class="gc" style="left:268px;width:209px;color:#000;background:#cdfcfc;box-shadow:inset 0 -1px 0 #fff;"><span></span></div><div class="gc" style="left:477px;width:49px;color:#000;"><span></span></div><div class="gc" style="left:526px;width:65px;color:#000;border-right:1px dotted #b4b4b4;width:66px;"><span>CAN</span></div></div>
<div class="rh" style="top:464px;background:#dde7f5"></div>
<div class="gr" style="top:464px;background:#efefef"><div class="gc" style="left:0px;width:49px;color:#000;border-left:none;padding-left:2.9px;"><span>000101</span></div><div class="gc" style="left:49px;width:49px;color:#000;"><span>0</span></div><div class="gc" style="left:98px;width:129px;color:#000;"><span>MENUISERIE DES LILAS</span></div><div class="gc" style="left:227px;width:41px;color:#000;"><span>65000</span></div><div class="gc" style="left:268px;width:209px;color:#000;background:#cdfcfc;box-shadow:inset 0 -1px 0 #fff;"><span>TARBES</span></div><div class="gc" style="left:477px;width:49px;color:#000;"><span></span></div><div class="gc" style="left:526px;width:65px;color:#000;border-right:1px dotted #b4b4b4;width:66px;"><span>CAN</span></div></div>
<div class="rh" style="top:480px;background:#dde7f5"></div>
<div class="gr" style="top:480px;background:#fff"><div class="gc" style="left:0px;width:49px;color:#000;border-left:none;padding-left:2.9px;"><span>000102</span></div><div class="gc" style="left:49px;width:49px;color:#000;"><span>0</span></div><div class="gc" style="left:98px;width:129px;color:#000;"><span>MENUISERIES GAC</span></div><div class="gc" style="left:227px;width:41px;color:#000;"><span>01120</span></div><div class="gc" style="left:268px;width:209px;color:#000;background:#cdfcfc;box-shadow:inset 0 -1px 0 #fff;"><span>MONTLUEL</span></div><div class="gc" style="left:477px;width:49px;color:#000;"><span>Pro</span></div><div class="gc" style="left:526px;width:65px;color:#000;border-right:1px dotted #b4b4b4;width:66px;"><span>NORD</span></div></div>
<div class="rh" style="top:496px;background:#dde7f5"></div>
<div class="gr" style="top:496px;background:#efefef"><div class="gc" style="left:0px;width:49px;color:#000;border-left:none;padding-left:2.9px;"><span>000103</span></div><div class="gc" style="left:49px;width:49px;color:#000;"><span>0</span></div><div class="gc" style="left:98px;width:129px;color:#000;"><span>MLE</span></div><div class="gc" style="left:227px;width:41px;color:#000;"><span>65000</span></div><div class="gc" style="left:268px;width:209px;color:#000;background:#cdfcfc;box-shadow:inset 0 -1px 0 #fff;"><span>TARBES</span></div><div class="gc" style="left:477px;width:49px;color:#000;"><span></span></div><div class="gc" style="left:526px;width:65px;color:#000;border-right:1px dotted #b4b4b4;width:66px;"><span>COMTEST</span></div></div>
<div class="rh" style="top:512px;background:#dde7f5"></div>
<div class="gr" style="top:512px;background:#fff"><div class="gc" style="left:0px;width:49px;color:#000;border-left:none;padding-left:2.9px;"><span>000113</span></div><div class="gc" style="left:49px;width:49px;color:#000;"><span>0</span></div><div class="gc" style="left:98px;width:129px;color:#000;"><span>C</span></div><div class="gc" style="left:227px;width:41px;color:#000;"><span>10200</span></div><div class="gc" style="left:268px;width:209px;color:#000;background:#cdfcfc;box-shadow:inset 0 -1px 0 #fff;"><span>BAR-SUR-AUBE</span></div><div class="gc" style="left:477px;width:49px;color:#000;"><span>NEGO</span></div><div class="gc" style="left:526px;width:65px;color:#000;border-right:1px dotted #b4b4b4;width:66px;"><span>NORD</span></div></div>
<div class="rh" style="top:528px;background:#dde7f5"></div>
<div class="gr" style="top:528px;background:#efefef"><div class="gc" style="left:0px;width:49px;color:#000;border-left:none;padding-left:2.9px;"><span>000119</span></div><div class="gc" style="left:49px;width:49px;color:#000;"><span>0</span></div><div class="gc" style="left:98px;width:129px;color:#000;"><span>ETS DUBOIS</span></div><div class="gc" style="left:227px;width:41px;color:#000;"><span></span></div><div class="gc" style="left:268px;width:209px;color:#000;background:#cdfcfc;box-shadow:inset 0 -1px 0 #fff;"><span></span></div><div class="gc" style="left:477px;width:49px;color:#000;"><span></span></div><div class="gc" style="left:526px;width:65px;color:#000;border-right:1px dotted #b4b4b4;width:66px;"><span>ADUPONT</span></div></div>
<div class="rh" style="top:544px;background:#dde7f5"></div>
<div class="gr" style="top:544px;background:#fff"><div class="gc" style="left:0px;width:49px;color:#000;border-left:none;padding-left:2.9px;"><span>000123</span></div><div class="gc" style="left:49px;width:49px;color:#000;"><span>0</span></div><div class="gc" style="left:98px;width:129px;color:#000;"><span>TEST GAC</span></div><div class="gc" style="left:227px;width:41px;color:#000;"><span></span></div><div class="gc" style="left:268px;width:209px;color:#000;background:#cdfcfc;box-shadow:inset 0 -1px 0 #fff;"><span></span></div><div class="gc" style="left:477px;width:49px;color:#000;"><span></span></div><div class="gc" style="left:526px;width:65px;color:#000;border-right:1px dotted #b4b4b4;width:66px;"><span>ADUPONT</span></div></div>
<div class="rh" style="top:560px;background:#dde7f5"></div>
<div class="gr" style="top:560px;background:#d03232"><div class="gc" style="left:0px;width:49px;color:#fff;border-left-color:#f4c4c4;border-left:none;padding-left:2.9px;"><span>000124</span></div><div class="gc" style="left:49px;width:49px;color:#fff;border-left-color:#f4c4c4;"><span>0</span></div><div class="gc" style="left:98px;width:129px;color:#fff;border-left-color:#f4c4c4;"><span>TREST</span></div><div class="gc" style="left:227px;width:41px;color:#fff;border-left-color:#f4c4c4;"><span>02100</span></div><div class="gc" style="left:268px;width:209px;color:#fff;border-left-color:#f4c4c4;"><span>SAINT QUENTIN</span></div><div class="gc" style="left:477px;width:49px;color:#fff;border-left-color:#f4c4c4;"><span></span></div><div class="gc" style="left:526px;width:65px;color:#fff;border-left-color:#f4c4c4;border-right:1px dotted #f4c4c4;width:66px;"><span>ADUPONT</span></div></div>
<div class="rh" style="top:576px;background:#dde7f5"></div>
<div class="gr" style="top:576px;background:#fff"><div class="gc" style="left:0px;width:49px;color:#000;border-left:none;padding-left:2.9px;"><span>000125</span></div><div class="gc" style="left:49px;width:49px;color:#000;"><span>0</span></div><div class="gc" style="left:98px;width:129px;color:#000;"><span>MENUISERIE JUILLANAIS</span></div><div class="gc" style="left:227px;width:41px;color:#000;"><span>65290</span></div><div class="gc" style="left:268px;width:209px;color:#000;background:#cdfcfc;box-shadow:inset 0 -1px 0 #fff;"><span>JUILLAN</span></div><div class="gc" style="left:477px;width:49px;color:#000;"><span></span></div><div class="gc" style="left:526px;width:65px;color:#000;border-right:1px dotted #b4b4b4;width:66px;"><span>CAN</span></div></div>
<div class="rh" style="top:592px;background:#dde7f5"></div>
<div class="gr" style="top:592px;background:#efefef"><div class="gc" style="left:0px;width:49px;color:#000;border-left:none;padding-left:2.9px;"><span>000126</span></div><div class="gc" style="left:49px;width:49px;color:#000;"><span>0</span></div><div class="gc" style="left:98px;width:129px;color:#000;"><span>FANNY</span></div><div class="gc" style="left:227px;width:41px;color:#000;"><span>65290</span></div><div class="gc" style="left:268px;width:209px;color:#000;background:#cdfcfc;box-shadow:inset 0 -1px 0 #fff;"><span>JUILLAN</span></div><div class="gc" style="left:477px;width:49px;color:#000;"><span></span></div><div class="gc" style="left:526px;width:65px;color:#000;border-right:1px dotted #b4b4b4;width:66px;"><span>EST</span></div></div>
<div class="rh" style="top:608px;background:#dde7f5"></div>
<div class="gr" style="top:608px;background:#fff"><div class="gc" style="left:0px;width:49px;color:#000;border-left:none;padding-left:2.9px;"><span>000127</span></div><div class="gc" style="left:49px;width:49px;color:#000;"><span>0</span></div><div class="gc" style="left:98px;width:129px;color:#000;"><span>MENUISERIE DE JUILLAN</span></div><div class="gc" style="left:227px;width:41px;color:#000;"><span>65290</span></div><div class="gc" style="left:268px;width:209px;color:#000;background:#cdfcfc;box-shadow:inset 0 -1px 0 #fff;"><span>Juillan</span></div><div class="gc" style="left:477px;width:49px;color:#000;"><span></span></div><div class="gc" style="left:526px;width:65px;color:#000;border-right:1px dotted #b4b4b4;width:66px;"><span>OUEST</span></div></div>
<div class="rh" style="top:624px;background:#dde7f5"></div>
<div class="gr" style="top:624px;background:#efefef"><div class="gc" style="left:0px;width:49px;color:#000;border-left:none;padding-left:2.9px;"><span>000128</span></div><div class="gc" style="left:49px;width:49px;color:#000;"><span>0</span></div><div class="gc" style="left:98px;width:129px;color:#000;"><span>BIGMAT BLOIS</span></div><div class="gc" style="left:227px;width:41px;color:#000;"><span>01120</span></div><div class="gc" style="left:268px;width:209px;color:#000;background:#cdfcfc;box-shadow:inset 0 -1px 0 #fff;"><span>MONTLUEL</span></div><div class="gc" style="left:477px;width:49px;color:#000;"><span></span></div><div class="gc" style="left:526px;width:65px;color:#000;border-right:1px dotted #b4b4b4;width:66px;"><span>OUEST</span></div></div>
<div class="rh" style="top:640px;background:#dde7f5"></div>
<div class="gr" style="top:640px;background:#fff"><div class="gc" style="left:0px;width:49px;color:#000;border-left:none;padding-left:2.9px;"><span>000129</span></div><div class="gc" style="left:49px;width:49px;color:#000;"><span>0</span></div><div class="gc" style="left:98px;width:129px;color:#000;"><span>MENUISERIE JUILLANAIS</span></div><div class="gc" style="left:227px;width:41px;color:#000;"><span>65290</span></div><div class="gc" style="left:268px;width:209px;color:#000;background:#cdfcfc;box-shadow:inset 0 -1px 0 #fff;"><span>Juillan</span></div><div class="gc" style="left:477px;width:49px;color:#000;"><span></span></div><div class="gc" style="left:526px;width:65px;color:#000;border-right:1px dotted #b4b4b4;width:66px;"><span>OUEST</span></div></div>
<div class="rh" style="top:656px;background:#dde7f5"></div>
<div class="gr" style="top:656px;background:#efefef"><div class="gc" style="left:0px;width:49px;color:#000;border-left:none;padding-left:2.9px;"><span>000130</span></div><div class="gc" style="left:49px;width:49px;color:#000;"><span>0</span></div><div class="gc" style="left:98px;width:129px;color:#000;"><span>ROBERT ALEXANDRE EN</span></div><div class="gc" style="left:227px;width:41px;color:#000;"><span>44420</span></div><div class="gc" style="left:268px;width:209px;color:#000;background:#cdfcfc;box-shadow:inset 0 -1px 0 #fff;"><span>PIRIAC SUR MER</span></div><div class="gc" style="left:477px;width:49px;color:#000;"><span></span></div><div class="gc" style="left:526px;width:65px;color:#000;border-right:1px dotted #b4b4b4;width:66px;"><span>EST</span></div></div>
<div class="rh" style="top:672px;background:#dde7f5"></div>
<div class="gr" style="top:672px;background:#fff"><div class="gc" style="left:0px;width:49px;color:#000;border-left:none;padding-left:2.9px;"><span>000131</span></div><div class="gc" style="left:49px;width:49px;color:#000;"><span>0</span></div><div class="gc" style="left:98px;width:129px;color:#000;"><span>TEST GAC 5</span></div><div class="gc" style="left:227px;width:41px;color:#000;"><span></span></div><div class="gc" style="left:268px;width:209px;color:#000;background:#cdfcfc;box-shadow:inset 0 -1px 0 #fff;"><span></span></div><div class="gc" style="left:477px;width:49px;color:#000;"><span></span></div><div class="gc" style="left:526px;width:65px;color:#000;border-right:1px dotted #b4b4b4;width:66px;"><span>ADUPONT</span></div></div>
<div class="rh" style="top:688px;background:#dde7f5"></div>
<div class="gr" style="top:688px;background:#efefef"><div class="gc" style="left:0px;width:49px;color:#000;border-left:none;padding-left:2.9px;"><span>GAC1</span></div><div class="gc" style="left:49px;width:49px;color:#000;"><span>0</span></div><div class="gc" style="left:98px;width:129px;color:#000;"><span>BIGMAT BLOIS</span></div><div class="gc" style="left:227px;width:41px;color:#000;"><span>01120</span></div><div class="gc" style="left:268px;width:209px;color:#000;background:#cdfcfc;box-shadow:inset 0 -1px 0 #fff;"><span>MONTLUEL</span></div><div class="gc" style="left:477px;width:49px;color:#000;"><span>AMOB</span></div><div class="gc" style="left:526px;width:65px;color:#000;border-right:1px dotted #b4b4b4;width:66px;"><span>NORD</span></div></div>
<div class="rh" style="top:704px;background:#dde7f5"></div>
<div class="gr" style="top:704px;background:#fff"><div class="gc" style="left:0px;width:49px;color:#000;border-left:none;padding-left:2.9px;"><span>GAC2</span></div><div class="gc" style="left:49px;width:49px;color:#000;"><span>0</span></div><div class="gc" style="left:98px;width:129px;color:#000;"><span>BIGMAT BLOIS</span></div><div class="gc" style="left:227px;width:41px;color:#000;"><span>01120</span></div><div class="gc" style="left:268px;width:209px;color:#000;background:#cdfcfc;box-shadow:inset 0 -1px 0 #fff;"><span>MONTLUEL</span></div><div class="gc" style="left:477px;width:49px;color:#000;"><span>AMOB</span></div><div class="gc" style="left:526px;width:65px;color:#000;border-right:1px dotted #b4b4b4;width:66px;"><span>TEST</span></div></div>
<div class="rh" style="top:720px;background:#dde7f5"></div>
<div class="gr" style="top:720px;background:#efefef"><div class="gc" style="left:0px;width:49px;color:#000;border-left:none;padding-left:2.9px;"><span>000001</span></div><div class="gc" style="left:49px;width:49px;color:#000;"><span>01</span></div><div class="gc" style="left:98px;width:129px;color:#000;"><span>MAISONS D'EN FRANCE</span></div><div class="gc" style="left:227px;width:41px;color:#000;"><span>65000</span></div><div class="gc" style="left:268px;width:209px;color:#000;background:#cdfcfc;box-shadow:inset 0 -1px 0 #fff;"><span>TARBES</span></div><div class="gc" style="left:477px;width:49px;color:#000;"><span></span></div><div class="gc" style="left:526px;width:65px;color:#000;border-right:1px dotted #b4b4b4;width:66px;"><span>COMTEST</span></div></div>
<div class="rh" style="top:736px;background:#dde7f5"></div>
<div class="gr" style="top:736px;background:#fff"><div class="gc" style="left:0px;width:49px;color:#000;border-left:none;padding-left:2.9px;"><span>000002</span></div><div class="gc" style="left:49px;width:49px;color:#000;"><span>01</span></div><div class="gc" style="left:98px;width:129px;color:#000;"><span>MAISONS D'EN FRANCE</span></div><div class="gc" style="left:227px;width:41px;color:#000;"><span>13090</span></div><div class="gc" style="left:268px;width:209px;color:#000;background:#cdfcfc;box-shadow:inset 0 -1px 0 #fff;"><span>Aix-en-provence</span></div><div class="gc" style="left:477px;width:49px;color:#000;"><span></span></div><div class="gc" style="left:526px;width:65px;color:#000;border-right:1px dotted #b4b4b4;width:66px;"><span>SUD</span></div></div>
<div class="rh" style="top:752px;background:#dde7f5"></div>
<div class="gr" style="top:752px;background:#d03232"><div class="gc" style="left:0px;width:49px;color:#fff;border-left-color:#f4c4c4;border-left:none;padding-left:2.9px;"><span>000003</span></div><div class="gc" style="left:49px;width:49px;color:#fff;border-left-color:#f4c4c4;"><span>01</span></div><div class="gc" style="left:98px;width:129px;color:#fff;border-left-color:#f4c4c4;"><span>BIGMAT CAEN</span></div><div class="gc" style="left:227px;width:41px;color:#fff;border-left-color:#f4c4c4;"><span>47550</span></div><div class="gc" style="left:268px;width:209px;color:#fff;border-left-color:#f4c4c4;"><span>BOE</span></div><div class="gc" style="left:477px;width:49px;color:#fff;border-left-color:#f4c4c4;"><span>Pro</span></div><div class="gc" style="left:526px;width:65px;color:#fff;border-left-color:#f4c4c4;border-right:1px dotted #f4c4c4;width:66px;"><span>OUEST</span></div></div>
<div class="rh" style="top:768px;background:#dde7f5"></div>
<div class="gr" style="top:768px;background:#fff"><div class="gc" style="left:0px;width:49px;color:#000;border-left:none;padding-left:2.9px;"><span>000004</span></div><div class="gc" style="left:49px;width:49px;color:#000;"><span>01</span></div><div class="gc" style="left:98px;width:129px;color:#000;"><span>BIGMAT SIEGE</span></div><div class="gc" style="left:227px;width:41px;color:#000;"><span>65000</span></div><div class="gc" style="left:268px;width:209px;color:#000;background:#cdfcfc;box-shadow:inset 0 -1px 0 #fff;"><span>Tarbes</span></div><div class="gc" style="left:477px;width:49px;color:#000;"><span>Pro</span></div><div class="gc" style="left:526px;width:65px;color:#000;border-right:1px dotted #b4b4b4;width:66px;"><span></span></div></div>
<div class="rh" style="top:784px;background:#dde7f5"></div>
<div class="gr" style="top:784px;background:#efefef"><div class="gc" style="left:0px;width:49px;color:#000;border-left:none;padding-left:2.9px;"><span>000005</span></div><div class="gc" style="left:49px;width:49px;color:#000;"><span>01</span></div><div class="gc" style="left:98px;width:129px;color:#000;"><span>BIGMAT BROU</span></div><div class="gc" style="left:227px;width:41px;color:#000;"><span>28160</span></div><div class="gc" style="left:268px;width:209px;color:#000;background:#cdfcfc;box-shadow:inset 0 -1px 0 #fff;"><span>BROU</span></div><div class="gc" style="left:477px;width:49px;color:#000;"><span>Pro</span></div><div class="gc" style="left:526px;width:65px;color:#000;border-right:1px dotted #b4b4b4;width:66px;"><span>NORD</span></div></div>
<div class="rh" style="top:800px;background:#dde7f5"></div>
<div class="gr" style="top:800px;background:#fff"><div class="gc" style="left:0px;width:49px;color:#000;border-left:none;padding-left:2.9px;"><span>000006</span></div><div class="gc" style="left:49px;width:49px;color:#000;"><span>01</span></div><div class="gc" style="left:98px;width:129px;color:#000;"><span>BIGMAT CANY</span></div><div class="gc" style="left:227px;width:41px;color:#000;"><span>64000</span></div><div class="gc" style="left:268px;width:209px;color:#000;background:#cdfcfc;box-shadow:inset 0 -1px 0 #fff;"><span>PAU</span></div><div class="gc" style="left:477px;width:49px;color:#000;"><span>Pro</span></div><div class="gc" style="left:526px;width:65px;color:#000;border-right:1px dotted #b4b4b4;width:66px;"><span>NORD</span></div></div>
<div class="rh" style="top:816px;background:#dde7f5"></div>
<div class="gr" style="top:816px;background:#d03232"><div class="gc" style="left:0px;width:49px;color:#fff;border-left-color:#f4c4c4;border-left:none;padding-left:2.9px;"><span>000007</span></div><div class="gc" style="left:49px;width:49px;color:#fff;border-left-color:#f4c4c4;"><span>01</span></div><div class="gc" style="left:98px;width:129px;color:#fff;border-left-color:#f4c4c4;"><span>BIGMAT AUCH</span></div><div class="gc" style="left:227px;width:41px;color:#fff;border-left-color:#f4c4c4;"><span>32000</span></div><div class="gc" style="left:268px;width:209px;color:#fff;border-left-color:#f4c4c4;"><span>AUCH</span></div><div class="gc" style="left:477px;width:49px;color:#fff;border-left-color:#f4c4c4;"><span>Pro</span></div><div class="gc" style="left:526px;width:65px;color:#fff;border-left-color:#f4c4c4;border-right:1px dotted #f4c4c4;width:66px;"><span>SUD</span></div></div>
<div class="rh" style="top:832px;background:#dde7f5"></div>
<div class="gr" style="top:832px;background:#fff"><div class="gc" style="left:0px;width:49px;color:#000;border-left:none;padding-left:2.9px;"><span>000008</span></div><div class="gc" style="left:49px;width:49px;color:#000;"><span>01</span></div><div class="gc" style="left:98px;width:129px;color:#000;"><span>BIGMAT CAUDEBEC</span></div><div class="gc" style="left:227px;width:41px;color:#000;"><span>76320</span></div><div class="gc" style="left:268px;width:209px;color:#000;background:#cdfcfc;box-shadow:inset 0 -1px 0 #fff;"><span>Caudebec-lès-Elbeuf</span></div><div class="gc" style="left:477px;width:49px;color:#000;"><span>Pro</span></div><div class="gc" style="left:526px;width:65px;color:#000;border-right:1px dotted #b4b4b4;width:66px;"><span>NORD</span></div></div>
<div class="rh" style="top:848px;background:#dde7f5"></div>
<div class="gr" style="top:848px;background:#d03232"><div class="gc" style="left:0px;width:49px;color:#fff;border-left-color:#f4c4c4;border-left:none;padding-left:2.9px;"><span>000009</span></div><div class="gc" style="left:49px;width:49px;color:#fff;border-left-color:#f4c4c4;"><span>01</span></div><div class="gc" style="left:98px;width:129px;color:#fff;border-left-color:#f4c4c4;"><span>BIGMAT AYTRE</span></div><div class="gc" style="left:227px;width:41px;color:#fff;border-left-color:#f4c4c4;"><span>17440</span></div><div class="gc" style="left:268px;width:209px;color:#fff;border-left-color:#f4c4c4;"><span>Aytre</span></div><div class="gc" style="left:477px;width:49px;color:#fff;border-left-color:#f4c4c4;"><span>Pro</span></div><div class="gc" style="left:526px;width:65px;color:#fff;border-left-color:#f4c4c4;border-right:1px dotted #f4c4c4;width:66px;"><span>OUEST</span></div></div>
<div class="rh" style="top:864px;background:#dde7f5"></div>
<div class="gr" style="top:864px;background:#d03232"><div class="gc" style="left:0px;width:49px;color:#fff;border-left-color:#f4c4c4;border-left:none;padding-left:2.9px;"><span>000010</span></div><div class="gc" style="left:49px;width:49px;color:#fff;border-left-color:#f4c4c4;"><span>01</span></div><div class="gc" style="left:98px;width:129px;color:#fff;border-left-color:#f4c4c4;"><span>BIGMAT CHAMBLY BROC</span></div><div class="gc" style="left:227px;width:41px;color:#fff;border-left-color:#f4c4c4;"><span>65000</span></div><div class="gc" style="left:268px;width:209px;color:#fff;border-left-color:#f4c4c4;"><span>TARBES</span></div><div class="gc" style="left:477px;width:49px;color:#fff;border-left-color:#f4c4c4;"><span>Pro</span></div><div class="gc" style="left:526px;width:65px;color:#fff;border-left-color:#f4c4c4;border-right:1px dotted #f4c4c4;width:66px;"><span>NORD</span></div></div>
<div class="rh" style="top:880px;background:#dde7f5"></div>
<div class="gr" style="top:880px;background:#d03232"><div class="gc" style="left:0px;width:49px;color:#fff;border-left-color:#f4c4c4;border-left:none;padding-left:2.9px;"><span>000011</span></div><div class="gc" style="left:49px;width:49px;color:#fff;border-left-color:#f4c4c4;"><span>01</span></div><div class="gc" style="left:98px;width:129px;color:#fff;border-left-color:#f4c4c4;"><span>BIGMAT BATAILLE BRET</span></div><div class="gc" style="left:227px;width:41px;color:#fff;border-left-color:#f4c4c4;"><span>27160</span></div><div class="gc" style="left:268px;width:209px;color:#fff;border-left-color:#f4c4c4;"><span>BRETEUIL</span></div><div class="gc" style="left:477px;width:49px;color:#fff;border-left-color:#f4c4c4;"><span>Pro</span></div><div class="gc" style="left:526px;width:65px;color:#fff;border-left-color:#f4c4c4;border-right:1px dotted #f4c4c4;width:66px;"><span>NORD</span></div></div>
<div class="rh" style="top:896px;background:#dde7f5"></div>
<div class="gr" style="top:896px;background:#fff"><div class="gc" style="left:0px;width:49px;color:#000;border-left:none;padding-left:2.9px;"><span>000012</span></div><div class="gc" style="left:49px;width:49px;color:#000;"><span>01</span></div><div class="gc" style="left:98px;width:129px;color:#000;"><span>BIGMAT BATAILLE LISIEU</span></div><div class="gc" style="left:227px;width:41px;color:#000;"><span>14100</span></div><div class="gc" style="left:268px;width:209px;color:#000;background:#cdfcfc;box-shadow:inset 0 -1px 0 #fff;"><span>Lisieux</span></div><div class="gc" style="left:477px;width:49px;color:#000;"><span>Pro</span></div><div class="gc" style="left:526px;width:65px;color:#000;border-right:1px dotted #b4b4b4;width:66px;"><span>NORD</span></div></div>
<div class="rh" style="top:912px;background:#dde7f5"></div>
<div class="gr" style="top:912px;background:#d03232"><div class="gc" style="left:0px;width:49px;color:#fff;border-left-color:#f4c4c4;border-left:none;padding-left:2.9px;"><span>000013</span></div><div class="gc" style="left:49px;width:49px;color:#fff;border-left-color:#f4c4c4;"><span>01</span></div><div class="gc" style="left:98px;width:129px;color:#fff;border-left-color:#f4c4c4;"><span>BIGMAT CHAMPAGNE-LES</span></div><div class="gc" style="left:227px;width:41px;color:#fff;border-left-color:#f4c4c4;"><span>85450</span></div><div class="gc" style="left:268px;width:209px;color:#fff;border-left-color:#f4c4c4;"><span>CHAMPAGNE-LES-MARAIS</span></div><div class="gc" style="left:477px;width:49px;color:#fff;border-left-color:#f4c4c4;"><span>Pro</span></div><div class="gc" style="left:526px;width:65px;color:#fff;border-left-color:#f4c4c4;border-right:1px dotted #f4c4c4;width:66px;"><span>OUEST</span></div></div>
<div class="rh" style="top:928px;background:#dde7f5"></div>
<div class="gr" style="top:928px;background:#d03232"><div class="gc" style="left:0px;width:49px;color:#fff;border-left-color:#f4c4c4;border-left:none;padding-left:2.9px;"><span>000014</span></div><div class="gc" style="left:49px;width:49px;color:#fff;border-left-color:#f4c4c4;"><span>01</span></div><div class="gc" style="left:98px;width:129px;color:#fff;border-left-color:#f4c4c4;"><span>BIGMAT CHATEAUNEUF</span></div><div class="gc" style="left:227px;width:41px;color:#fff;border-left-color:#f4c4c4;"><span>45110</span></div><div class="gc" style="left:268px;width:209px;color:#fff;border-left-color:#f4c4c4;"><span>CHATEAUNEUF-SUR-LOIRE</span></div><div class="gc" style="left:477px;width:49px;color:#fff;border-left-color:#f4c4c4;"><span>Pro</span></div><div class="gc" style="left:526px;width:65px;color:#fff;border-left-color:#f4c4c4;border-right:1px dotted #f4c4c4;width:66px;"><span>NORD</span></div></div>
<div class="rh" style="top:944px;background:#dde7f5"></div>
<div class="gr" style="top:944px;background:#efefef"><div class="gc" style="left:0px;width:49px;color:#000;border-left:none;padding-left:2.9px;"><span>000015</span></div><div class="gc" style="left:49px;width:49px;color:#000;"><span>01</span></div><div class="gc" style="left:98px;width:129px;color:#000;"><span>BIGMAT CONDOM</span></div><div class="gc" style="left:227px;width:41px;color:#000;"><span>32100</span></div><div class="gc" style="left:268px;width:209px;color:#000;background:#cdfcfc;box-shadow:inset 0 -1px 0 #fff;"><span>CONDOM</span></div><div class="gc" style="left:477px;width:49px;color:#000;"><span>Pro</span></div><div class="gc" style="left:526px;width:65px;color:#000;border-right:1px dotted #b4b4b4;width:66px;"><span>SUD</span></div></div>
<div class="rh" style="top:960px;background:#dde7f5"></div>
<div class="gr" style="top:960px;background:#fff"><div class="gc" style="left:0px;width:49px;color:#000;border-left:none;padding-left:2.9px;"><span>000016</span></div><div class="gc" style="left:49px;width:49px;color:#000;"><span>01</span></div><div class="gc" style="left:98px;width:129px;color:#000;"><span>BIGMAT BAULE</span></div><div class="gc" style="left:227px;width:41px;color:#000;"><span>45130</span></div><div class="gc" style="left:268px;width:209px;color:#000;background:#cdfcfc;box-shadow:inset 0 -1px 0 #fff;"><span>BAULE</span></div><div class="gc" style="left:477px;width:49px;color:#000;"><span></span></div><div class="gc" style="left:526px;width:65px;color:#000;border-right:1px dotted #b4b4b4;width:66px;"><span>NORD</span></div></div>
<div class="rh" style="top:976px;background:#dde7f5"></div>
<div class="gr" style="top:976px;background:#d03232"><div class="gc" style="left:0px;width:49px;color:#fff;border-left-color:#f4c4c4;border-left:none;padding-left:2.9px;"><span>000017</span></div><div class="gc" style="left:49px;width:49px;color:#fff;border-left-color:#f4c4c4;"><span>01</span></div><div class="gc" style="left:98px;width:129px;color:#fff;border-left-color:#f4c4c4;"><span>BIGMAT COUSANCE</span></div><div class="gc" style="left:227px;width:41px;color:#fff;border-left-color:#f4c4c4;"><span>39190</span></div><div class="gc" style="left:268px;width:209px;color:#fff;border-left-color:#f4c4c4;"><span>COUSANCE</span></div><div class="gc" style="left:477px;width:49px;color:#fff;border-left-color:#f4c4c4;"><span>PART</span></div><div class="gc" style="left:526px;width:65px;color:#fff;border-left-color:#f4c4c4;border-right:1px dotted #f4c4c4;width:66px;"><span>OUEST</span></div></div>
<div class="a" style="left:438px;top:223px;width:50px;height:17px;box-sizing:border-box;border:1px solid #000;border-right-width:2px;border-bottom-width:2px"></div>
<div class="a" style="left:1148px;top:206px;width:16px;height:786px;background:#7296c0;"></div>
<div class="a" style="left:1148px;top:206px;width:16px;height:17px;box-sizing:border-box;border:1px solid #56688f;background:linear-gradient(90deg,#d9e5f6 50%,#c3d5ef 50%)"></div>
<svg class="a" style="left:1151px;top:210px;" width="10" height="8" viewBox="0 0 10 8"><path d="M0.5 6.5 L5 1.5 L9.5 6.5Z" fill="#3d4660"/></svg>
<div class="a" style="left:1148px;top:222px;width:16px;height:279px;box-sizing:border-box;border:1px solid #56688f;background:linear-gradient(90deg,#d9e5f6 50%,#c3d5ef 50%)"></div>
<div class="a" style="left:1148px;top:976px;width:16px;height:16px;box-sizing:border-box;border:1px solid #56688f;background:linear-gradient(90deg,#d9e5f6 50%,#c3d5ef 50%)"></div>
<svg class="a" style="left:1151px;top:981px;" width="10" height="8" viewBox="0 0 10 8"><path d="M0.5 1.5 L5 6.5 L9.5 1.5Z" fill="#3d4660"/></svg>
<div class="a" style="left:411px;top:999px;width:77px;height:20px;box-sizing:border-box;border:1px solid #adadad;background:#e1e1e1"></div>
<svg class="a" style="left:420px;top:1003px;" width="12" height="12" viewBox="0 0 12 12"><path d="M1.5 1.5 L10.5 10.5 M10.5 1.5 L1.5 10.5" stroke="#e8501e" stroke-width="2.4" stroke-linecap="round"/></svg>
<div class="t" style="top:1002.84px;font-size:12px;height:12px;line-height:12px;color:#000;left:437px;"><span style="display:inline-block;transform:scaleX(0.9);transform-origin:0 0">Abandon</span></div>
<svg class="a" style="left:1087px;top:424px;" width="13" height="20" viewBox="0 0 13 20"><path d="M0.6 0.6 V16.2 L4.3 12.6 L6.9 18.2 Q7.5 19 8.6 18.4 Q9.6 17.8 9.1 16.8 L6.7 11.7 H11.8Z" fill="#fff" stroke="#1a1a24" stroke-width="1.2" stroke-linejoin="round"/></svg>
<div class="a" style="left:1171px;top:204px;width:749px;height:24px;background:linear-gradient(#ededed,#f7f7f7)"></div>
<div class="a" style="left:1171px;top:227px;width:749px;height:1px;background:#a0a0a0;"></div>
<svg width="0" height="0" style="position:absolute"><defs><linearGradient id="tg" x1="0" y1="0" x2="0" y2="1"><stop offset="0" stop-color="#f4f4f4"/><stop offset="1" stop-color="#fcfcfc"/></linearGradient><linearGradient id="tgi" x1="0" y1="0" x2="0" y2="1"><stop offset="0" stop-color="#efefef"/><stop offset="1" stop-color="#f7f7f7"/></linearGradient></defs></svg>
<svg class="a" style="left:1170px;top:208px;overflow:visible" width="750" height="21" viewBox="0 0 750 21"><path d="M1 20 L9.5 4 Q11.5 0.5 14.5 0.5 H62 Q65 0.5 67 4 L77 20" transform="translate(103 0)" fill="url(#tgi)"/><path d="M1 20 L9.5 4 Q11.5 0.5 14.5 0.5 H72 Q75 0.5 77 4 L87 20" transform="translate(173 0)" fill="url(#tgi)"/><path d="M1 20 L9.5 4 Q11.5 0.5 14.5 0.5 H58 Q61 0.5 63 4 L73 20" transform="translate(254 0)" fill="url(#tgi)"/><path d="M1 20 L9.5 4 Q11.5 0.5 14.5 0.5 H62 Q65 0.5 67 4 L77 20" transform="translate(321 0)" fill="url(#tgi)"/><path d="M1 20 L9.5 4 Q11.5 0.5 14.5 0.5 H52 Q55 0.5 57 4 L67 20" transform="translate(393 0)" fill="url(#tgi)"/><path d="M1 20 L9.5 4 Q11.5 0.5 14.5 0.5 H79 Q82 0.5 84 4 L94 20" transform="translate(455 0)" fill="url(#tgi)"/><path d="M1 20 L9.5 4 Q11.5 0.5 14.5 0.5 H79 Q82 0.5 84 4 L94 20" transform="translate(544 0)" fill="url(#tgi)"/><path d="M1 20 L9.5 4 Q11.5 0.5 14.5 0.5 H62 Q65 0.5 67 4 L77 20" transform="translate(103 0)" fill="none" stroke="#9a9a9a" stroke-width="1"/><path d="M1 20 L9.5 4 Q11.5 0.5 14.5 0.5 H72 Q75 0.5 77 4 L87 20" transform="translate(173 0)" fill="none" stroke="#9a9a9a" stroke-width="1"/><path d="M1 20 L9.5 4 Q11.5 0.5 14.5 0.5 H58 Q61 0.5 63 4 L73 20" transform="translate(254 0)" fill="none" stroke="#9a9a9a" stroke-width="1"/><path d="M1 20 L9.5 4 Q11.5 0.5 14.5 0.5 H62 Q65 0.5 67 4 L77 20" transform="translate(321 0)" fill="none" stroke="#9a9a9a" stroke-width="1"/><path d="M1 20 L9.5 4 Q11.5 0.5 14.5 0.5 H52 Q55 0.5 57 4 L67 20" transform="translate(393 0)" fill="none" stroke="#9a9a9a" stroke-width="1"/><path d="M1 20 L9.5 4 Q11.5 0.5 14.5 0.5 H79 Q82 0.5 84 4 L94 20" transform="translate(455 0)" fill="none" stroke="#9a9a9a" stroke-width="1"/><path d="M1 20 L9.5 4 Q11.5 0.5 14.5 0.5 H79 Q82 0.5 84 4 L94 20" transform="translate(544 0)" fill="none" stroke="#9a9a9a" stroke-width="1"/><path d="M1 20 L9.5 4 Q11.5 0.5 14.5 0.5 H89 Q92 0.5 94 4 L104 20" transform="translate(6 0)" fill="url(#tg)" stroke="#9a9a9a" stroke-width="1"/></svg>
<div class="a" style="left:1178px;top:227px;width:101px;height:3px;background:#f8f8f8;"></div>
<svg class="a" style="left:1188px;top:211px;overflow:visible" width="16" height="15" viewBox="0 0 16 15"><path d="M5.2 -0.6 H10.6 L13 1.8 V11.6 H5.2Z" fill="#f2ece0" stroke="#c8bfae" stroke-width="0.7"/><path d="M10.6 -0.6 V1.8 H13" fill="none" stroke="#a8a090" stroke-width="0.7"/><path d="M0.9 3.2 H6.4 L8.9 5.7 V14.6 H0.9Z" fill="#f6f1e6" stroke="#c8bfae" stroke-width="0.7"/><path d="M6.4 3.2 V5.7 H8.9" fill="none" stroke="#a8a090" stroke-width="0.7"/></svg>
<div class="t" style="top:211.68px;font-size:11.6px;height:11.6px;line-height:11.6px;color:#000;font-weight:bold;left:1205.6px;">Généralités</div>
<svg class="a" style="left:1279px;top:211px;overflow:visible" width="16" height="15" viewBox="0 0 16 15"><path d="M10.5 2.5 L15 4.5 V12 L10.5 13.5Z" fill="#b8b8b8"/><path d="M1.2 1.6 Q1.4 0.4 2.8 0.4 H9.6 Q11 0.4 11 1.8 V12.6 Q11 13.4 10 13.4 H1.2 Q0.4 13.4 0.4 12.6Z" fill="#d42020"/><rect x="1.6" y="2.4" width="8.4" height="3.6" rx="0.6" fill="#404040"/><rect x="1.8" y="8.6" width="8" height="2.2" fill="#a81818"/><rect x="0.6" y="13" width="10.2" height="1.4" fill="#606060"/></svg>
<div class="t" style="top:211.84px;font-size:12px;height:12px;line-height:12px;color:#000;left:1298.3px;"><span style="display:inline-block;transform:scaleX(0.883);transform-origin:0 0">Livraison</span></div>
<svg class="a" style="left:1351px;top:211px;overflow:visible" width="16" height="15" viewBox="0 0 16 15"><rect x="1" y="1" width="10" height="12" fill="#d8dcd8" stroke="#8a9a8a" stroke-width="0.8"/><rect x="5" y="5" width="8" height="9" fill="#bcd8bc" stroke="#7a9a7a" stroke-width="0.8"/><path d="M2.5 3.5H9M2.5 6H4.5M2.5 8.5H4.5" stroke="#8a8a8a" stroke-width="0.8"/></svg>
<div class="t" style="top:211.84px;font-size:12px;height:12px;line-height:12px;color:#000;left:1368.6px;"><span style="display:inline-block;transform:scaleX(0.883);transform-origin:0 0">Facturation</span></div>
<svg class="a" style="left:1431px;top:211px;overflow:visible" width="16" height="15" viewBox="0 0 16 15"><text x="1" y="13" font-size="15" font-weight="bold" font-family="Liberation Sans" fill="#6a9a1a">$</text></svg>
<div class="t" style="top:211.84px;font-size:12px;height:12px;line-height:12px;color:#000;left:1449px;"><span style="display:inline-block;transform:scaleX(0.883);transform-origin:0 0">Encours</span></div>
<svg class="a" style="left:1498px;top:211px;overflow:visible" width="16" height="15" viewBox="0 0 16 15"><circle cx="5" cy="4" r="2.6" fill="#e8b040"/><path d="M0.6 13 Q0.6 7.4 5 7.4 Q9.4 7.4 9.4 13Z" fill="#9a6ac8"/><circle cx="10.5" cy="3.6" r="2.6" fill="#e8c080"/><path d="M6.5 13 Q6.5 7 10.5 7 Q14.5 7 14.5 13Z" fill="#7ab0e0"/></svg>
<div class="t" style="top:211.84px;font-size:12px;height:12px;line-height:12px;color:#000;left:1515.5px;"><span style="display:inline-block;transform:scaleX(0.883);transform-origin:0 0">Contacts</span></div>
<svg class="a" style="left:1570px;top:211px;overflow:visible" width="16" height="15" viewBox="0 0 16 15"><path d="M1.2 6.4 L4.2 9.6 L10.4 2.2" fill="none" stroke="#2aa5b0" stroke-width="2.2"/></svg>
<div class="t" style="top:211.84px;font-size:12px;height:12px;line-height:12px;color:#000;left:1586px;"><span style="display:inline-block;transform:scaleX(0.883);transform-origin:0 0">Actions</span></div>
<svg class="a" style="left:1631px;top:211px;overflow:visible" width="16" height="15" viewBox="0 0 16 15"><path d="M1 8 L9 1 L14 6 L6 13Z" fill="#a8d890" stroke="#78a860" stroke-width="0.8"/><circle cx="7.5" cy="7" r="2" fill="#e8c040"/></svg>
<div class="t" style="top:211.84px;font-size:12px;height:12px;line-height:12px;color:#000;left:1648.5px;"><span style="display:inline-block;transform:scaleX(0.883);transform-origin:0 0">Opportunités</span></div>
<svg class="a" style="left:1721px;top:211px;overflow:visible" width="16" height="15" viewBox="0 0 16 15"><path d="M1.2 6.4 L4.2 9.6 L10.4 2.2" fill="none" stroke="#2aa5b0" stroke-width="2.2"/></svg>
<div class="t" style="top:211.84px;font-size:12px;height:12px;line-height:12px;color:#000;left:1736.4px;"><span style="display:inline-block;transform:scaleX(0.883);transform-origin:0 0">Qui, quand ?</span></div>
<div class="a" style="left:1177px;top:232px;width:580px;height:25px;background:#00a5b4;"></div>
<div class="t" style="top:241.24px;font-size:12px;height:12px;line-height:12px;color:#fff;font-weight:bold;left:1209.6px;letter-spacing:0.3px"><span style="display:inline-block;transform:scaleX(0.9);transform-origin:0 0">DONNEES</span></div>
<div class="t" style="top:241.24px;font-size:12px;height:12px;line-height:12px;color:#fff;font-weight:bold;left:1579.2px;letter-spacing:0.3px"><span style="display:inline-block;transform:scaleX(0.91);transform-origin:0 0">CLASSIFICATION</span></div>
<div class="a" style="left:1177px;top:663px;width:580px;height:25px;background:#00a5b4;"></div>
<div class="t" style="top:671.64px;font-size:12px;height:12px;line-height:12px;color:#fff;font-weight:bold;left:1209px;letter-spacing:0.2px"><span style="display:inline-block;transform:scaleX(0.9);transform-origin:0 0">ADRESSE PRINCIPALE</span></div>
<div class="t" style="top:271.34px;font-size:12px;height:12px;line-height:12px;color:#000;left:1063px;width:200px;text-align:right;"><span style="display:inline-block;transform:scaleX(0.875);transform-origin:100% 0">Réseau</span></div>
<div class="a" style="left:1271px;top:268px;width:90px;height:20px;background:#eaeef9;"></div>
<div class="t" style="top:271.68px;font-size:12.9px;height:12.9px;line-height:12.9px;color:#000;font-weight:bold;left:1274px;"><span style="display:inline-block;transform:scaleX(0.93);transform-origin:0 0">0</span></div>
<div class="a" style="left:1364px;top:269px;width:14px;height:14px;box-sizing:border-box;border:2px solid #c2c2c2;background:#fff;font-size:11.5px;font-weight:bold;line-height:10px;text-align:center;color:#000">?</div>
<div class="t" style="top:271.34px;font-size:12px;height:12px;line-height:12px;color:#000;left:1384.5px;"><span style="display:inline-block;transform:scaleX(0.875);transform-origin:0 0">Réseau GénéralDocuments liés ?</span></div>
<div class="a" style="left:1551px;top:271px;width:10px;height:10px;box-sizing:border-box;border:1px solid #c6c6c6;background:#fff"></div>
<div class="t" style="top:296.34px;font-size:12px;height:12px;line-height:12px;color:#000;left:1063px;width:200px;text-align:right;"><span style="display:inline-block;transform:scaleX(0.875);transform-origin:100% 0">Client</span></div>
<div class="a" style="left:1271px;top:293px;width:90px;height:20px;background:#eaeef9;"></div>
<div class="t" style="top:296.68px;font-size:12.9px;height:12.9px;line-height:12.9px;color:#000;font-weight:bold;left:1274px;"><span style="display:inline-block;transform:scaleX(0.93);transform-origin:0 0">000001</span></div>
<div class="t" style="top:321.34px;font-size:12px;height:12px;line-height:12px;color:#000;left:1063px;width:200px;text-align:right;"><span style="display:inline-block;transform:scaleX(0.875);transform-origin:100% 0">Raison sociale</span></div>
<div class="a" style="left:1271px;top:318px;width:240px;height:20px;background:#eaeef9;"></div>
<div class="t" style="top:321.68px;font-size:12.9px;height:12.9px;line-height:12.9px;color:#000;font-weight:bold;left:1274px;"><span style="display:inline-block;transform:scaleX(0.93);transform-origin:0 0">BIGMAT BLOIS</span></div>
<div class="t" style="top:345.84px;font-size:12px;height:12px;line-height:12px;color:#000;left:1063px;width:200px;text-align:right;"><span style="display:inline-block;transform:scaleX(0.875);transform-origin:100% 0">Facturation</span></div>
<div class="a" style="left:1271px;top:343px;width:10px;height:16px;background:#eaeef9;"></div>
<div class="a" style="left:1271px;top:346px;width:10px;height:10px;box-sizing:border-box;border:1px solid #c6c6c6;background:#fff"></div>
<svg class="a" style="left:1272px;top:347px;" width="8" height="8" viewBox="0 0 8 8"><path d="M1.2 4.2 L3.2 6.2 L7 2" fill="none" stroke="#b8b8b8" stroke-width="1.1"/></svg>
<div class="t" style="top:345.84px;font-size:12px;height:12px;line-height:12px;color:#000;left:1173px;width:200px;text-align:right;"><span style="display:inline-block;transform:scaleX(0.875);transform-origin:100% 0">Livraison</span></div>
<div class="a" style="left:1381px;top:346px;width:10px;height:10px;box-sizing:border-box;border:1px solid #c6c6c6;background:#fff"></div>
<svg class="a" style="left:1382px;top:347px;" width="8" height="8" viewBox="0 0 8 8"><path d="M1.2 4.2 L3.2 6.2 L7 2" fill="none" stroke="#b8b8b8" stroke-width="1.1"/></svg>
<div class="t" style="top:367.84px;font-size:12px;height:12px;line-height:12px;color:#000;left:1063px;width:200px;text-align:right;"><span style="display:inline-block;transform:scaleX(0.875);transform-origin:100% 0">Client facturé</span></div>
<div class="a" style="left:1271px;top:365px;width:90px;height:20px;background:#eaeef9;"></div>
<div class="a" style="left:1364px;top:366px;width:14px;height:14px;box-sizing:border-box;border:2px solid #c2c2c2;background:#fff;font-size:11.5px;font-weight:bold;line-height:10px;text-align:center;color:#000">?</div>
<div class="t" style="top:392.84px;font-size:12px;height:12px;line-height:12px;color:#000;left:1063px;width:200px;text-align:right;"><span style="display:inline-block;transform:scaleX(0.875);transform-origin:100% 0">Type blocage</span></div>
<div class="a" style="left:1271px;top:390px;width:90px;height:20px;background:#eaeef9;"></div>
<div class="a" style="left:1364px;top:391px;width:14px;height:14px;box-sizing:border-box;border:2px solid #c2c2c2;background:#fff;font-size:11.5px;font-weight:bold;line-height:10px;text-align:center;color:#000">?</div>
<div class="t" style="top:417.84px;font-size:12px;height:12px;line-height:12px;color:#000;left:1063px;width:200px;text-align:right;"><span style="display:inline-block;transform:scaleX(0.875);transform-origin:100% 0">Motif</span></div>
<div class="a" style="left:1271px;top:415px;width:240px;height:98px;box-sizing:border-box;border:1px solid #828282;background:#fff"></div>
<div class="a" style="left:1493px;top:417px;width:16px;height:94px;background:#f0f0f0;"></div>
<svg class="a" style="left:1495px;top:420px;" width="12" height="8" viewBox="0 0 12 8"><path d="M2 6 L6 2 L10 6" fill="none" stroke="#c0c0c0" stroke-width="1.2"/></svg>
<svg class="a" style="left:1495px;top:499px;" width="12" height="8" viewBox="0 0 12 8"><path d="M2 2 L6 6 L10 2" fill="none" stroke="#c0c0c0" stroke-width="1.2"/></svg>
<div class="t" style="top:270.84px;font-size:12px;height:12px;line-height:12px;color:#000;left:1408px;width:200px;text-align:right;"><span style="display:inline-block;transform:scaleX(0.875);transform-origin:100% 0">Groupe</span></div>
<div class="a" style="left:1616px;top:268px;width:110px;height:20px;background:#eaeef9;"></div>
<div class="t" style="top:271.68px;font-size:12.9px;height:12.9px;line-height:12.9px;color:#000;font-weight:bold;left:1619px;"><span style="display:inline-block;transform:scaleX(0.93);transform-origin:0 0">000001</span></div>
<div class="a" style="left:1729px;top:269px;width:14px;height:14px;box-sizing:border-box;border:2px solid #c2c2c2;background:#fff;font-size:11.5px;font-weight:bold;line-height:10px;text-align:center;color:#000">?</div>
<div class="t" style="top:295.84px;font-size:12px;height:12px;line-height:12px;color:#000;left:1408px;width:200px;text-align:right;"><span style="display:inline-block;transform:scaleX(0.875);transform-origin:100% 0">Forme juridique</span></div>
<div class="a" style="left:1616px;top:293px;width:110px;height:20px;background:#eaeef9;"></div>
<div class="t" style="top:296.68px;font-size:12.9px;height:12.9px;line-height:12.9px;color:#000;font-weight:bold;left:1619px;"><span style="display:inline-block;transform:scaleX(0.93);transform-origin:0 0">EURL</span></div>
<div class="a" style="left:1729px;top:294px;width:14px;height:14px;box-sizing:border-box;border:2px solid #c2c2c2;background:#fff;font-size:11.5px;font-weight:bold;line-height:10px;text-align:center;color:#000">?</div>
<div class="t" style="top:295.84px;font-size:12px;height:12px;line-height:12px;color:#000;left:1749px;"><span style="display:inline-block;transform:scaleX(0.875);transform-origin:0 0">Entreprise Unipers. à Resp. Limitée</span></div>
<div class="t" style="top:320.84px;font-size:12px;height:12px;line-height:12px;color:#000;left:1408px;width:200px;text-align:right;"><span style="display:inline-block;transform:scaleX(0.875);transform-origin:100% 0">Code SIRET</span></div>
<div class="a" style="left:1616px;top:318px;width:110px;height:20px;background:#eaeef9;"></div>
<div class="t" style="top:345.84px;font-size:12px;height:12px;line-height:12px;color:#000;left:1408px;width:200px;text-align:right;"><span style="display:inline-block;transform:scaleX(0.875);transform-origin:100% 0">Numéro SIREN</span></div>
<div class="a" style="left:1616px;top:343px;width:110px;height:20px;background:#eaeef9;"></div>
<div class="t" style="top:370.84px;font-size:12px;height:12px;line-height:12px;color:#000;left:1408px;width:200px;text-align:right;"><span style="display:inline-block;transform:scaleX(0.875);transform-origin:100% 0">Code NAF</span></div>
<div class="a" style="left:1616px;top:368px;width:110px;height:20px;background:#eaeef9;"></div>
<div class="t" style="top:371.68px;font-size:12.9px;height:12.9px;line-height:12.9px;color:#000;font-weight:bold;left:1619px;"><span style="display:inline-block;transform:scaleX(0.93);transform-origin:0 0">0115Z</span></div>
<div class="a" style="left:1729px;top:369px;width:14px;height:14px;box-sizing:border-box;border:2px solid #c2c2c2;background:#fff;font-size:11.5px;font-weight:bold;line-height:10px;text-align:center;color:#000">?</div>
<div class="t" style="top:395.84px;font-size:12px;height:12px;line-height:12px;color:#000;left:1408px;width:200px;text-align:right;"><span style="display:inline-block;transform:scaleX(0.875);transform-origin:100% 0">Commercial</span></div>
<div class="a" style="left:1616px;top:393px;width:110px;height:20px;background:#eaeef9;"></div>
<div class="t" style="top:396.68px;font-size:12.9px;height:12.9px;line-height:12.9px;color:#000;font-weight:bold;left:1619px;"><span style="display:inline-block;transform:scaleX(0.93);transform-origin:0 0">NORD</span></div>
<div class="a" style="left:1729px;top:394px;width:14px;height:14px;box-sizing:border-box;border:2px solid #c2c2c2;background:#fff;font-size:11.5px;font-weight:bold;line-height:10px;text-align:center;color:#000">?</div>
<div class="t" style="top:395.84px;font-size:12px;height:12px;line-height:12px;color:#000;left:1749px;"><span style="display:inline-block;transform:scaleX(0.875);transform-origin:0 0">Paul PATRICK</span></div>
<div class="t" style="top:420.84px;font-size:12px;height:12px;line-height:12px;color:#000;left:1408px;width:200px;text-align:right;"><span style="display:inline-block;transform:scaleX(0.875);transform-origin:100% 0">Famille</span></div>
<div class="a" style="left:1616px;top:418px;width:110px;height:20px;background:#eaeef9;"></div>
<div class="t" style="top:421.68px;font-size:12.9px;height:12.9px;line-height:12.9px;color:#000;font-weight:bold;left:1619px;"><span style="display:inline-block;transform:scaleX(0.93);transform-origin:0 0">Pro</span></div>
<div class="a" style="left:1729px;top:419px;width:14px;height:14px;box-sizing:border-box;border:2px solid #c2c2c2;background:#fff;font-size:11.5px;font-weight:bold;line-height:10px;text-align:center;color:#000">?</div>
<div class="t" style="top:420.84px;font-size:12px;height:12px;line-height:12px;color:#000;left:1749px;"><span style="display:inline-block;transform:scaleX(0.875);transform-origin:0 0">Professionnel</span></div>
<div class="t" style="top:445.84px;font-size:12px;height:12px;line-height:12px;color:#000;left:1408px;width:200px;text-align:right;"><span style="display:inline-block;transform:scaleX(0.875);transform-origin:100% 0">Secteur activité</span></div>
<div class="a" style="left:1616px;top:443px;width:110px;height:20px;background:#eaeef9;"></div>
<div class="t" style="top:446.68px;font-size:12.9px;height:12.9px;line-height:12.9px;color:#000;font-weight:bold;left:1619px;"><span style="display:inline-block;transform:scaleX(0.93);transform-origin:0 0">07</span></div>
<div class="a" style="left:1729px;top:444px;width:14px;height:14px;box-sizing:border-box;border:2px solid #c2c2c2;background:#fff;font-size:11.5px;font-weight:bold;line-height:10px;text-align:center;color:#000">?</div>
<div class="t" style="top:445.84px;font-size:12px;height:12px;line-height:12px;color:#000;left:1749px;"><span style="display:inline-block;transform:scaleX(0.875);transform-origin:0 0">Menuiserie</span></div>
<div class="t" style="top:470.84px;font-size:12px;height:12px;line-height:12px;color:#000;left:1408px;width:200px;text-align:right;"><span style="display:inline-block;transform:scaleX(0.875);transform-origin:100% 0">Domaine activité</span></div>
<div class="a" style="left:1616px;top:468px;width:110px;height:20px;background:#eaeef9;"></div>
<div class="t" style="top:495.84px;font-size:12px;height:12px;line-height:12px;color:#000;left:1408px;width:200px;text-align:right;"><span style="display:inline-block;transform:scaleX(0.875);transform-origin:100% 0">Indice confiance</span></div>
<div class="a" style="left:1616px;top:493px;width:110px;height:20px;background:#eaeef9;"></div>
<div class="t" style="top:496.68px;font-size:12.9px;height:12.9px;line-height:12.9px;color:#000;font-weight:bold;left:1619px;"><span style="display:inline-block;transform:scaleX(0.93);transform-origin:0 0">001</span></div>
<div class="a" style="left:1729px;top:494px;width:14px;height:14px;box-sizing:border-box;border:2px solid #c2c2c2;background:#fff;font-size:11.5px;font-weight:bold;line-height:10px;text-align:center;color:#000">?</div>
<div class="t" style="top:495.84px;font-size:12px;height:12px;line-height:12px;color:#000;left:1749px;"><span style="display:inline-block;transform:scaleX(0.875);transform-origin:0 0">AAA</span></div>
<div class="a" style="left:1750px;top:269px;width:14px;height:14px;box-sizing:border-box;border:1px solid #c0c0c0;background:#cccccc"></div>
<div class="t" style="top:521.34px;font-size:12px;height:12px;line-height:12px;color:#000;left:1062px;width:200px;text-align:right;"><span style="display:inline-block;transform:scaleX(0.875);transform-origin:100% 0">Commentaire ext</span></div>
<div class="a" style="left:1270px;top:518px;width:455px;height:65px;box-sizing:border-box;border:1px solid #828282;background:#eaeef9"></div>
<div class="a" style="left:1706px;top:520px;width:17px;height:61px;background:#ededed;"></div>
<svg class="a" style="left:1709px;top:524px;" width="12" height="8" viewBox="0 0 12 8"><path d="M2 6 L6 2 L10 6" fill="none" stroke="#c0c0c0" stroke-width="1.2"/></svg>
<svg class="a" style="left:1709px;top:568px;" width="12" height="8" viewBox="0 0 12 8"><path d="M2 2 L6 6 L10 2" fill="none" stroke="#c0c0c0" stroke-width="1.2"/></svg>
<div class="t" style="top:522.08px;font-size:12.9px;height:12.9px;line-height:12.9px;color:#000;font-weight:bold;left:1273.8px;"><span style="display:inline-block;transform:scaleX(0.905);transform-origin:0 0">Commentaire externe du client</span></div>
<div class="t" style="top:591.34px;font-size:12px;height:12px;line-height:12px;color:#000;left:1062px;width:200px;text-align:right;"><span style="display:inline-block;transform:scaleX(0.875);transform-origin:100% 0">Commentaire int</span></div>
<div class="a" style="left:1270px;top:588px;width:455px;height:65px;box-sizing:border-box;border:1px solid #828282;background:#eaeef9"></div>
<div class="a" style="left:1706px;top:590px;width:17px;height:61px;background:#ededed;"></div>
<svg class="a" style="left:1709px;top:594px;" width="12" height="8" viewBox="0 0 12 8"><path d="M2 6 L6 2 L10 6" fill="none" stroke="#c0c0c0" stroke-width="1.2"/></svg>
<svg class="a" style="left:1709px;top:638px;" width="12" height="8" viewBox="0 0 12 8"><path d="M2 2 L6 6 L10 2" fill="none" stroke="#c0c0c0" stroke-width="1.2"/></svg>
<div class="t" style="top:592.08px;font-size:12.9px;height:12.9px;line-height:12.9px;color:#000;font-weight:bold;left:1273.8px;"><span style="display:inline-block;transform:scaleX(0.905);transform-origin:0 0">Commentaire interne du client</span></div>
<div class="t" style="top:695.34px;font-size:12px;height:12px;line-height:12px;color:#000;left:1060px;width:200px;text-align:right;"><span style="display:inline-block;transform:scaleX(0.875);transform-origin:100% 0">Correspondant</span></div>
<div class="a" style="left:1268px;top:693px;width:200px;height:20px;background:#eaeef9;"></div>
<div class="t" style="top:695.34px;font-size:12px;height:12px;line-height:12px;color:#000;left:1345px;width:200px;text-align:right;"><span style="display:inline-block;transform:scaleX(0.875);transform-origin:100% 0">Contact</span></div>
<div class="a" style="left:1553px;top:693px;width:170px;height:20px;background:#eaeef9;"></div>
<div class="t" style="top:720.34px;font-size:12px;height:12px;line-height:12px;color:#000;left:1060px;width:200px;text-align:right;"><span style="display:inline-block;transform:scaleX(0.875);transform-origin:100% 0">Adresse</span></div>
<div class="a" style="left:1268px;top:718px;width:455px;height:18px;background:#eaeef9;"></div>
<div class="t" style="top:720.48px;font-size:12.9px;height:12.9px;line-height:12.9px;color:#000;font-weight:bold;left:1271.6px;"><span style="display:inline-block;transform:scaleX(0.95);transform-origin:0 0">5 BLD DE L'INDUSTRIE</span></div>
<div class="a" style="left:1268px;top:737px;width:455px;height:18px;background:#eaeef9;"></div>
<div class="t" style="top:739.48px;font-size:12.9px;height:12.9px;line-height:12.9px;color:#000;font-weight:bold;left:1271.6px;"><span style="display:inline-block;transform:scaleX(0.95);transform-origin:0 0">Complément adresse</span></div>
<div class="a" style="left:1268px;top:756px;width:455px;height:18px;background:#eaeef9;"></div>
<div class="t" style="top:758.48px;font-size:12.9px;height:12.9px;line-height:12.9px;color:#000;font-weight:bold;left:1271.6px;"><span style="display:inline-block;transform:scaleX(0.95);transform-origin:0 0">Complément adresse bis</span></div>
<div class="t" style="top:782.84px;font-size:12px;height:12px;line-height:12px;color:#000;left:1060px;width:200px;text-align:right;"><span style="display:inline-block;transform:scaleX(0.875);transform-origin:100% 0">Code postal</span></div>
<div class="a" style="left:1268px;top:780px;width:200px;height:20px;background:#eaeef9;"></div>
<div class="t" style="top:783.68px;font-size:12.9px;height:12.9px;line-height:12.9px;color:#000;font-weight:bold;left:1271px;"><span style="display:inline-block;transform:scaleX(0.93);transform-origin:0 0">01120</span></div>
<div class="a" style="left:1471px;top:781px;width:14px;height:14px;box-sizing:border-box;border:2px solid #c2c2c2;background:#fff;font-size:11.5px;font-weight:bold;line-height:10px;text-align:center;color:#000">?</div>
<div class="t" style="top:782.84px;font-size:12px;height:12px;line-height:12px;color:#000;left:1345px;width:200px;text-align:right;"><span style="display:inline-block;transform:scaleX(0.875);transform-origin:100% 0">Ville</span></div>
<div class="a" style="left:1553px;top:780px;width:170px;height:20px;background:#eaeef9;"></div>
<div class="t" style="top:783.68px;font-size:12.9px;height:12.9px;line-height:12.9px;color:#000;font-weight:bold;left:1556px;"><span style="display:inline-block;transform:scaleX(0.93);transform-origin:0 0">MONTLUEL</span></div>
<div class="a" style="left:1726px;top:781px;width:14px;height:14px;box-sizing:border-box;border:2px solid #c2c2c2;background:#fff;font-size:11.5px;font-weight:bold;line-height:10px;text-align:center;color:#000">?</div>
<div class="t" style="top:807.84px;font-size:12px;height:12px;line-height:12px;color:#000;left:1060px;width:200px;text-align:right;"><span style="display:inline-block;transform:scaleX(0.875);transform-origin:100% 0">Pays</span></div>
<div class="a" style="left:1268px;top:805px;width:200px;height:20px;background:#eaeef9;"></div>
<div class="t" style="top:808.68px;font-size:12.9px;height:12.9px;line-height:12.9px;color:#000;font-weight:bold;left:1271px;"><span style="display:inline-block;transform:scaleX(0.93);transform-origin:0 0">FR</span></div>
<div class="a" style="left:1471px;top:806px;width:14px;height:14px;box-sizing:border-box;border:2px solid #c2c2c2;background:#fff;font-size:11.5px;font-weight:bold;line-height:10px;text-align:center;color:#000">?</div>
<div class="t" style="top:832.84px;font-size:12px;height:12px;line-height:12px;color:#000;left:1060px;width:200px;text-align:right;"><span style="display:inline-block;transform:scaleX(0.875);transform-origin:100% 0">Téléphone</span></div>
<div class="a" style="left:1268px;top:830px;width:200px;height:20px;background:#eaeef9;"></div>
<div class="t" style="top:833.68px;font-size:12.9px;height:12.9px;line-height:12.9px;color:#000;font-weight:bold;left:1271px;"><span style="display:inline-block;transform:scaleX(0.93);transform-origin:0 0">05 63 40 50 60</span></div>
<div class="a" style="left:1471px;top:831px;width:14px;height:14px;box-sizing:border-box;border:2px solid #c2c2c2;background:#fff;font-size:11.5px;font-weight:bold;line-height:10px;text-align:center;color:#000">?</div>
<div class="t" style="top:832.84px;font-size:12px;height:12px;line-height:12px;color:#000;left:1345px;width:200px;text-align:right;"><span style="display:inline-block;transform:scaleX(0.875);transform-origin:100% 0">Portable</span></div>
<div class="a" style="left:1553px;top:830px;width:170px;height:20px;background:#eaeef9;"></div>
<div class="t" style="top:833.68px;font-size:12.9px;height:12.9px;line-height:12.9px;color:#000;font-weight:bold;left:1556px;"><span style="display:inline-block;transform:scaleX(0.93);transform-origin:0 0">06 10 56 91 01</span></div>
<div class="a" style="left:1726px;top:831px;width:14px;height:14px;box-sizing:border-box;border:2px solid #c2c2c2;background:#fff;font-size:11.5px;font-weight:bold;line-height:10px;text-align:center;color:#000">?</div>
<div class="t" style="top:857.84px;font-size:12px;height:12px;line-height:12px;color:#000;left:1060px;width:200px;text-align:right;"><span style="display:inline-block;transform:scaleX(0.875);transform-origin:100% 0">E.Mail</span></div>
<div class="a" style="left:1268px;top:855px;width:200px;height:20px;box-sizing:border-box;border:1px solid #7a7a7a;background:#eaeef9"></div>
<div class="t" style="top:858.68px;font-size:12.9px;height:12.9px;line-height:12.9px;color:#000;font-weight:bold;left:1271.6px;"><span style="display:inline-block;transform:scaleX(0.93);transform-origin:0 0">test@test.fr,fhoubert@elcia.co</span></div>
<div class="a" style="left:1450px;top:857px;width:15px;height:16px;background:#eaeef9;"></div>
<svg class="a" style="left:1452px;top:858px;" width="10" height="14" viewBox="0 0 10 14"><path d="M2 5 L5 2 L8 5 M2 9 L5 12 L8 9" fill="none" stroke="#505050" stroke-width="1.1"/></svg>
<div class="t" style="top:857.84px;font-size:12px;height:12px;line-height:12px;color:#000;left:1345px;width:200px;text-align:right;"><span style="display:inline-block;transform:scaleX(0.875);transform-origin:100% 0">Fax</span></div>
<div class="a" style="left:1553px;top:855px;width:170px;height:20px;background:#eaeef9;"></div>
<div class="t" style="top:858.68px;font-size:12.9px;height:12.9px;line-height:12.9px;color:#000;font-weight:bold;left:1556px;"><span style="display:inline-block;transform:scaleX(0.93);transform-origin:0 0">02 54 42 55 87</span></div>
<div class="a" style="left:1726px;top:856px;width:14px;height:14px;box-sizing:border-box;border:2px solid #c2c2c2;background:#fff;font-size:11.5px;font-weight:bold;line-height:10px;text-align:center;color:#000">?</div>
<div class="a" style="left:1176px;top:971px;width:744px;height:20px;background:#f0f0f0;"></div>
<div class="a" style="left:1193px;top:971px;width:648px;height:15px;background:#cdcdcd;"></div>
<svg class="a" style="left:1179px;top:974px;" width="10" height="10" viewBox="0 0 10 10"><path d="M6.5 1.5 L3 5 L6.5 8.5" fill="none" stroke="#000" stroke-width="1.4"/></svg>
<svg class="a" style="left:1906px;top:974px;" width="10" height="10" viewBox="0 0 10 10"><path d="M3.5 1.5 L7 5 L3.5 8.5" fill="none" stroke="#000" stroke-width="1.4"/></svg>
<div class="a" style="left:1177px;top:999px;width:80px;height:20px;box-sizing:border-box;border:1px solid #c2c2c2;background:#d8d8d8"></div>
<svg class="a" style="left:1185px;top:1003px;" width="12" height="12" viewBox="0 0 12 12"><path d="M1 6.5 L4.5 10 L11 2.5" fill="none" stroke="#b6b6b6" stroke-width="2.2"/></svg>
<div class="t" style="top:1002.84px;font-size:12px;height:12px;line-height:12px;color:#838383;left:1203px;"><span style="display:inline-block;transform:scaleX(0.875);transform-origin:0 0">Validation</span></div>
<div class="a" style="left:1261px;top:999px;width:80px;height:20px;box-sizing:border-box;border:1px solid #c2c2c2;background:#d8d8d8"></div>
<div class="t" style="top:1002.84px;font-size:12px;height:12px;line-height:12px;color:#838383;left:1261.0px;width:80px;text-align:center;"><span style="display:inline-block;transform:scaleX(0.875);transform-origin:50% 0">Sauvegarde</span></div>
<div class="a" style="left:1345px;top:999px;width:80px;height:20px;box-sizing:border-box;border:1px solid #c2c2c2;background:#d8d8d8"></div>
<svg class="a" style="left:1355px;top:1003px;" width="12" height="12" viewBox="0 0 12 12"><path d="M1.5 1.5 L10.5 10.5 M10.5 1.5 L1.5 10.5" stroke="#b6b6b6" stroke-width="2.4"/></svg>
<div class="t" style="top:1002.84px;font-size:12px;height:12px;line-height:12px;color:#838383;left:1373px;"><span style="display:inline-block;transform:scaleX(0.875);transform-origin:0 0">Abandon</span></div>
<svg class="a" style="left:1908px;top:1033px;" width="12" height="12" viewBox="0 0 12 12"><g fill="#8aaed6"><rect x="9" y="1" width="1.5" height="1.5"/><rect x="6" y="4" width="1.5" height="1.5"/><rect x="9" y="4" width="1.5" height="1.5"/><rect x="3" y="7" width="1.5" height="1.5"/><rect x="6" y="7" width="1.5" height="1.5"/><rect x="9" y="7" width="1.5" height="1.5"/></g></svg>
</body></html>
